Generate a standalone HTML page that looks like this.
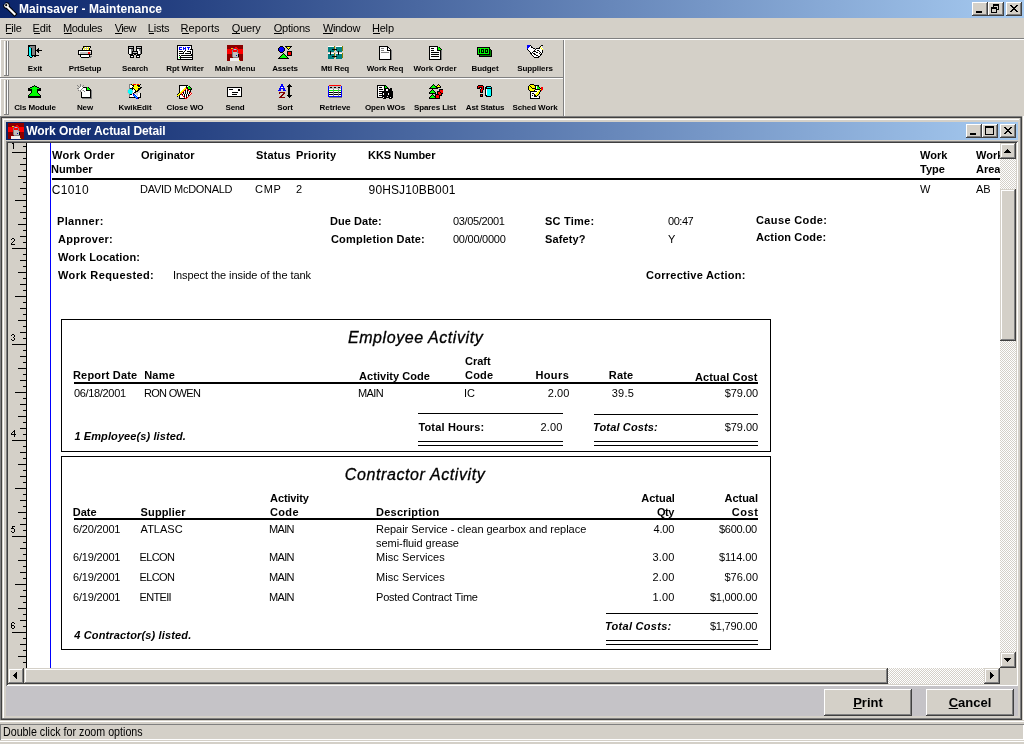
<!DOCTYPE html><html><head><meta charset="utf-8"><style>
html,body{margin:0;padding:0;}
body{width:1024px;height:744px;overflow:hidden;position:relative;background:#D4D0C8;font-family:"Liberation Sans", sans-serif;}
div{box-sizing:border-box;}
svg{position:absolute;shape-rendering:crispEdges;}
.dith{background-color:#fff;background-image:linear-gradient(45deg,#D4D0C8 25%,transparent 25%,transparent 75%,#D4D0C8 75%),linear-gradient(45deg,#D4D0C8 25%,transparent 25%,transparent 75%,#D4D0C8 75%);background-size:2px 2px;background-position:0 0,1px 1px;}
#wrap{position:absolute;left:0;top:0;width:1024px;height:744px;will-change:transform;}
</style></head><body><div id="wrap">
<div style="position:absolute;left:0px;top:0px;width:1024px;height:18px;background:linear-gradient(to right,#0A246A,#A6CAF0);"></div>
<svg style="left:0px;top:0px;shape-rendering:geometricPrecision" width="18" height="18" viewBox="0 0 18 18"><path d="M8 7.5 L14.5 14" stroke="#000" stroke-width="4.2" stroke-linecap="square"/><circle cx="6.5" cy="5.5" r="3.2" fill="#000"/><path d="M8 7.5 L14.5 14" stroke="#fff" stroke-width="2.2" stroke-linecap="square"/><circle cx="6.5" cy="5.5" r="2.3" fill="#fff"/><circle cx="6.2" cy="5.2" r="1.1" fill="#000"/><rect x="3" y="2" width="2.2" height="2.2" fill="#0A246A"/></svg>
<div style="position:absolute;left:19.00px;top:2.84px;font-size:12px;line-height:12px;font-weight:bold;font-style:normal;color:#fff;white-space:nowrap;letter-spacing:0.045px;">Mainsaver - Maintenance</div>
<div style="position:absolute;left:972px;top:2px;width:16px;height:14px;background:#D4D0C8;box-shadow:inset -1px -1px #404040, inset 1px 1px #fff, inset -2px -2px #808080;"></div>
<div style="position:absolute;left:976px;top:11px;width:6px;height:2px;background:#000;"></div>
<div style="position:absolute;left:988px;top:2px;width:16px;height:14px;background:#D4D0C8;box-shadow:inset -1px -1px #404040, inset 1px 1px #fff, inset -2px -2px #808080;"></div>
<svg style="left:988px;top:2px" width="16" height="14" viewBox="0 0 16 14"><rect x="5" y="2" width="6" height="1" fill="#000"/><rect x="5" y="3" width="6" height="1" fill="#000"/><rect x="5" y="4" width="1" height="1" fill="#000"/><rect x="10" y="4" width="1" height="4" fill="#000"/><rect x="9" y="7" width="2" height="1" fill="#000"/><rect x="3" y="5" width="6" height="2" fill="#000"/><rect x="3" y="7" width="1" height="4" fill="#000"/><rect x="8" y="7" width="1" height="4" fill="#000"/><rect x="3" y="10" width="6" height="1" fill="#000"/></svg>
<div style="position:absolute;left:1006px;top:2px;width:16px;height:14px;background:#D4D0C8;box-shadow:inset -1px -1px #404040, inset 1px 1px #fff, inset -2px -2px #808080;"></div>
<svg style="left:1006px;top:2px" width="16" height="14" fill="#000"><rect x="4" y="3" width="1" height="1"/><rect x="5" y="3" width="1" height="1"/><rect x="10" y="3" width="1" height="1"/><rect x="11" y="3" width="1" height="1"/><rect x="5" y="4" width="1" height="1"/><rect x="6" y="4" width="1" height="1"/><rect x="9" y="4" width="1" height="1"/><rect x="10" y="4" width="1" height="1"/><rect x="6" y="5" width="1" height="1"/><rect x="7" y="5" width="1" height="1"/><rect x="8" y="5" width="1" height="1"/><rect x="9" y="5" width="1" height="1"/><rect x="7" y="6" width="1" height="1"/><rect x="8" y="6" width="1" height="1"/><rect x="6" y="7" width="1" height="1"/><rect x="7" y="7" width="1" height="1"/><rect x="8" y="7" width="1" height="1"/><rect x="9" y="7" width="1" height="1"/><rect x="5" y="8" width="1" height="1"/><rect x="6" y="8" width="1" height="1"/><rect x="9" y="8" width="1" height="1"/><rect x="10" y="8" width="1" height="1"/><rect x="4" y="9" width="1" height="1"/><rect x="5" y="9" width="1" height="1"/><rect x="10" y="9" width="1" height="1"/><rect x="11" y="9" width="1" height="1"/></svg>
<div style="position:absolute;left:4.90px;top:22.69px;font-size:11px;line-height:11px;font-weight:normal;font-style:normal;color:#000;white-space:nowrap;letter-spacing:-0.267px;">File</div>
<div style="position:absolute;left:6px;top:33px;width:6px;height:1px;background:#000;"></div>
<div style="position:absolute;left:32.60px;top:22.69px;font-size:11px;line-height:11px;font-weight:normal;font-style:normal;color:#000;white-space:nowrap;letter-spacing:-0.133px;">Edit</div>
<div style="position:absolute;left:34px;top:33px;width:6px;height:1px;background:#000;"></div>
<div style="position:absolute;left:62.90px;top:22.69px;font-size:11px;line-height:11px;font-weight:normal;font-style:normal;color:#000;white-space:nowrap;letter-spacing:-0.317px;">Modules</div>
<div style="position:absolute;left:64px;top:33px;width:8px;height:1px;background:#000;"></div>
<div style="position:absolute;left:114.80px;top:22.69px;font-size:11px;line-height:11px;font-weight:normal;font-style:normal;color:#000;white-space:nowrap;letter-spacing:-0.700px;">View</div>
<div style="position:absolute;left:115px;top:33px;width:7px;height:1px;background:#000;"></div>
<div style="position:absolute;left:147.80px;top:22.69px;font-size:11px;line-height:11px;font-weight:normal;font-style:normal;color:#000;white-space:nowrap;letter-spacing:-0.225px;">Lists</div>
<div style="position:absolute;left:149px;top:33px;width:5px;height:1px;background:#000;"></div>
<div style="position:absolute;left:180.60px;top:22.69px;font-size:11px;line-height:11px;font-weight:normal;font-style:normal;color:#000;white-space:nowrap;letter-spacing:0.083px;">Reports</div>
<div style="position:absolute;left:182px;top:33px;width:7px;height:1px;background:#000;"></div>
<div style="position:absolute;left:231.80px;top:22.69px;font-size:11px;line-height:11px;font-weight:normal;font-style:normal;color:#000;white-space:nowrap;letter-spacing:-0.225px;">Query</div>
<div style="position:absolute;left:232px;top:33px;width:8px;height:1px;background:#000;"></div>
<div style="position:absolute;left:273.80px;top:22.69px;font-size:11px;line-height:11px;font-weight:normal;font-style:normal;color:#000;white-space:nowrap;letter-spacing:-0.233px;">Options</div>
<div style="position:absolute;left:274px;top:33px;width:8px;height:1px;background:#000;"></div>
<div style="position:absolute;left:323.00px;top:22.69px;font-size:11px;line-height:11px;font-weight:normal;font-style:normal;color:#000;white-space:nowrap;letter-spacing:-0.360px;">Window</div>
<div style="position:absolute;left:323px;top:33px;width:10px;height:1px;background:#000;"></div>
<div style="position:absolute;left:371.90px;top:22.69px;font-size:11px;line-height:11px;font-weight:normal;font-style:normal;color:#000;white-space:nowrap;letter-spacing:-0.167px;">Help</div>
<div style="position:absolute;left:373px;top:33px;width:7px;height:1px;background:#000;"></div>
<div style="position:absolute;left:0px;top:38px;width:1024px;height:1px;background:#808080;"></div>
<div style="position:absolute;left:0px;top:39px;width:1024px;height:1px;background:#fff;"></div>
<div style="position:absolute;left:0px;top:39px;width:1px;height:77px;background:#fff;"></div>
<div style="position:absolute;left:0px;top:77px;width:563px;height:1px;background:#808080;"></div>
<div style="position:absolute;left:0px;top:78px;width:563px;height:1px;background:#fff;"></div>
<div style="position:absolute;left:563px;top:40px;width:1px;height:76px;background:#808080;"></div>
<div style="position:absolute;left:564px;top:40px;width:1px;height:76px;background:#fff;"></div>
<div style="position:absolute;left:0px;top:116px;width:1024px;height:1px;background:#808080;"></div>
<div style="position:absolute;left:4px;top:41px;width:1px;height:35px;background:#fff;"></div>
<div style="position:absolute;left:6px;top:41px;width:1px;height:35px;background:#808080;"></div>
<div style="position:absolute;left:7px;top:41px;width:1px;height:35px;background:#fff;"></div>
<div style="position:absolute;left:8px;top:41px;width:1px;height:35px;background:#808080;"></div>
<div style="position:absolute;left:4px;top:75px;width:3px;height:1px;background:#808080;"></div>
<div style="position:absolute;left:7px;top:75px;width:2px;height:1px;background:#808080;"></div>
<div style="position:absolute;left:4px;top:80px;width:1px;height:35px;background:#fff;"></div>
<div style="position:absolute;left:6px;top:80px;width:1px;height:35px;background:#808080;"></div>
<div style="position:absolute;left:7px;top:80px;width:1px;height:35px;background:#fff;"></div>
<div style="position:absolute;left:8px;top:80px;width:1px;height:35px;background:#808080;"></div>
<div style="position:absolute;left:4px;top:114px;width:3px;height:1px;background:#808080;"></div>
<div style="position:absolute;left:7px;top:114px;width:2px;height:1px;background:#808080;"></div>
<div style="position:absolute;left:-165px;width:400px;text-align:center;top:64.53px;font-size:8px;line-height:8px;font-weight:bold;font-style:normal;color:#000;white-space:nowrap;letter-spacing:-0.1px;">Exit</div>
<div style="position:absolute;left:-115px;width:400px;text-align:center;top:64.53px;font-size:8px;line-height:8px;font-weight:bold;font-style:normal;color:#000;white-space:nowrap;letter-spacing:-0.1px;">PrtSetup</div>
<div style="position:absolute;left:-65px;width:400px;text-align:center;top:64.53px;font-size:8px;line-height:8px;font-weight:bold;font-style:normal;color:#000;white-space:nowrap;letter-spacing:-0.1px;">Search</div>
<div style="position:absolute;left:-15px;width:400px;text-align:center;top:64.53px;font-size:8px;line-height:8px;font-weight:bold;font-style:normal;color:#000;white-space:nowrap;letter-spacing:-0.1px;">Rpt Writer</div>
<div style="position:absolute;left:35px;width:400px;text-align:center;top:64.53px;font-size:8px;line-height:8px;font-weight:bold;font-style:normal;color:#000;white-space:nowrap;letter-spacing:-0.1px;">Main Menu</div>
<div style="position:absolute;left:85px;width:400px;text-align:center;top:64.53px;font-size:8px;line-height:8px;font-weight:bold;font-style:normal;color:#000;white-space:nowrap;letter-spacing:-0.1px;">Assets</div>
<div style="position:absolute;left:135px;width:400px;text-align:center;top:64.53px;font-size:8px;line-height:8px;font-weight:bold;font-style:normal;color:#000;white-space:nowrap;letter-spacing:-0.1px;">Mtl Req</div>
<div style="position:absolute;left:185px;width:400px;text-align:center;top:64.53px;font-size:8px;line-height:8px;font-weight:bold;font-style:normal;color:#000;white-space:nowrap;letter-spacing:-0.1px;">Work Req</div>
<div style="position:absolute;left:235px;width:400px;text-align:center;top:64.53px;font-size:8px;line-height:8px;font-weight:bold;font-style:normal;color:#000;white-space:nowrap;letter-spacing:-0.1px;">Work Order</div>
<div style="position:absolute;left:285px;width:400px;text-align:center;top:64.53px;font-size:8px;line-height:8px;font-weight:bold;font-style:normal;color:#000;white-space:nowrap;letter-spacing:-0.1px;">Budget</div>
<div style="position:absolute;left:335px;width:400px;text-align:center;top:64.53px;font-size:8px;line-height:8px;font-weight:bold;font-style:normal;color:#000;white-space:nowrap;letter-spacing:-0.1px;">Suppliers</div>
<div style="position:absolute;left:-165px;width:400px;text-align:center;top:103.53px;font-size:8px;line-height:8px;font-weight:bold;font-style:normal;color:#000;white-space:nowrap;letter-spacing:-0.1px;">Cls Module</div>
<div style="position:absolute;left:-115px;width:400px;text-align:center;top:103.53px;font-size:8px;line-height:8px;font-weight:bold;font-style:normal;color:#000;white-space:nowrap;letter-spacing:-0.1px;">New</div>
<div style="position:absolute;left:-65px;width:400px;text-align:center;top:103.53px;font-size:8px;line-height:8px;font-weight:bold;font-style:normal;color:#000;white-space:nowrap;letter-spacing:-0.1px;">KwikEdit</div>
<div style="position:absolute;left:-15px;width:400px;text-align:center;top:103.53px;font-size:8px;line-height:8px;font-weight:bold;font-style:normal;color:#000;white-space:nowrap;letter-spacing:-0.1px;">Close WO</div>
<div style="position:absolute;left:35px;width:400px;text-align:center;top:103.53px;font-size:8px;line-height:8px;font-weight:bold;font-style:normal;color:#000;white-space:nowrap;letter-spacing:-0.1px;">Send</div>
<div style="position:absolute;left:85px;width:400px;text-align:center;top:103.53px;font-size:8px;line-height:8px;font-weight:bold;font-style:normal;color:#000;white-space:nowrap;letter-spacing:-0.1px;">Sort</div>
<div style="position:absolute;left:135px;width:400px;text-align:center;top:103.53px;font-size:8px;line-height:8px;font-weight:bold;font-style:normal;color:#000;white-space:nowrap;letter-spacing:-0.1px;">Retrieve</div>
<div style="position:absolute;left:185px;width:400px;text-align:center;top:103.53px;font-size:8px;line-height:8px;font-weight:bold;font-style:normal;color:#000;white-space:nowrap;letter-spacing:-0.1px;">Open WOs</div>
<div style="position:absolute;left:235px;width:400px;text-align:center;top:103.53px;font-size:8px;line-height:8px;font-weight:bold;font-style:normal;color:#000;white-space:nowrap;letter-spacing:-0.1px;">Spares List</div>
<div style="position:absolute;left:285px;width:400px;text-align:center;top:103.53px;font-size:8px;line-height:8px;font-weight:bold;font-style:normal;color:#000;white-space:nowrap;letter-spacing:-0.1px;">Ast Status</div>
<div style="position:absolute;left:335px;width:400px;text-align:center;top:103.53px;font-size:8px;line-height:8px;font-weight:bold;font-style:normal;color:#000;white-space:nowrap;letter-spacing:-0.1px;">Sched Work</div>
<svg style="left:27px;top:44px" width="16" height="16" viewBox="0 0 16 16"><rect x="1" y="1" width="8" height="1" fill="#000"/><rect x="1" y="2" width="2" height="1" fill="#000"/><rect x="3" y="2" width="5" height="1" fill="#808080"/><rect x="8" y="2" width="1" height="1" fill="#000"/><rect x="1" y="3" width="1" height="1" fill="#000"/><rect x="2" y="3" width="1" height="1" fill="#00FFFF"/><rect x="3" y="3" width="5" height="1" fill="#808080"/><rect x="8" y="3" width="1" height="1" fill="#000"/><rect x="1" y="4" width="1" height="1" fill="#000"/><rect x="2" y="4" width="2" height="1" fill="#00FFFF"/><rect x="4" y="4" width="1" height="1" fill="#000"/><rect x="5" y="4" width="3" height="1" fill="#808080"/><rect x="8" y="4" width="1" height="1" fill="#000"/><rect x="11" y="4" width="1" height="1" fill="#000"/><rect x="1" y="5" width="1" height="1" fill="#000"/><rect x="2" y="5" width="2" height="1" fill="#00FFFF"/><rect x="4" y="5" width="1" height="1" fill="#000"/><rect x="5" y="5" width="3" height="1" fill="#808080"/><rect x="8" y="5" width="1" height="1" fill="#000"/><rect x="10" y="5" width="2" height="1" fill="#000"/><rect x="1" y="6" width="1" height="1" fill="#000"/><rect x="2" y="6" width="2" height="1" fill="#00FFFF"/><rect x="4" y="6" width="1" height="1" fill="#000"/><rect x="5" y="6" width="3" height="1" fill="#808080"/><rect x="8" y="6" width="7" height="1" fill="#000"/><rect x="1" y="7" width="1" height="1" fill="#000"/><rect x="2" y="7" width="2" height="1" fill="#00FFFF"/><rect x="4" y="7" width="1" height="1" fill="#000"/><rect x="5" y="7" width="3" height="1" fill="#808080"/><rect x="8" y="7" width="1" height="1" fill="#000"/><rect x="10" y="7" width="2" height="1" fill="#000"/><rect x="1" y="8" width="1" height="1" fill="#000"/><rect x="2" y="8" width="2" height="1" fill="#00FFFF"/><rect x="4" y="8" width="1" height="1" fill="#000"/><rect x="5" y="8" width="3" height="1" fill="#808080"/><rect x="8" y="8" width="1" height="1" fill="#000"/><rect x="11" y="8" width="1" height="1" fill="#000"/><rect x="1" y="9" width="1" height="1" fill="#000"/><rect x="2" y="9" width="2" height="1" fill="#00FFFF"/><rect x="4" y="9" width="1" height="1" fill="#000"/><rect x="5" y="9" width="3" height="1" fill="#808080"/><rect x="8" y="9" width="1" height="1" fill="#000"/><rect x="1" y="10" width="1" height="1" fill="#000"/><rect x="2" y="10" width="2" height="1" fill="#00FFFF"/><rect x="4" y="10" width="1" height="1" fill="#000"/><rect x="5" y="10" width="3" height="1" fill="#808080"/><rect x="8" y="10" width="1" height="1" fill="#000"/><rect x="0" y="11" width="2" height="1" fill="#000"/><rect x="2" y="11" width="2" height="1" fill="#00FFFF"/><rect x="4" y="11" width="8" height="1" fill="#000"/><rect x="2" y="12" width="1" height="1" fill="#000"/><rect x="3" y="12" width="2" height="1" fill="#00FFFF"/><rect x="5" y="12" width="1" height="1" fill="#000"/><rect x="7" y="12" width="2" height="1" fill="#000"/><rect x="3" y="13" width="2" height="1" fill="#000"/></svg>
<svg style="left:77px;top:44px" width="16" height="16" viewBox="0 0 16 16"><rect x="6" y="2" width="8" height="1" fill="#000"/><rect x="6" y="3" width="1" height="1" fill="#000"/><rect x="7" y="3" width="1" height="1" fill="#FFFF00"/><rect x="8" y="3" width="1" height="1" fill="#fff"/><rect x="9" y="3" width="1" height="1" fill="#FFFF00"/><rect x="10" y="3" width="1" height="1" fill="#fff"/><rect x="11" y="3" width="1" height="1" fill="#FFFF00"/><rect x="12" y="3" width="1" height="1" fill="#fff"/><rect x="13" y="3" width="1" height="1" fill="#000"/><rect x="5" y="4" width="1" height="1" fill="#000"/><rect x="6" y="4" width="1" height="1" fill="#FFFF00"/><rect x="7" y="4" width="4" height="1" fill="#C0C0C0"/><rect x="11" y="4" width="1" height="1" fill="#FFFF00"/><rect x="12" y="4" width="1" height="1" fill="#000"/><rect x="5" y="5" width="1" height="1" fill="#000"/><rect x="6" y="5" width="1" height="1" fill="#fff"/><rect x="7" y="5" width="1" height="1" fill="#FFFF00"/><rect x="8" y="5" width="1" height="1" fill="#fff"/><rect x="9" y="5" width="1" height="1" fill="#FFFF00"/><rect x="10" y="5" width="1" height="1" fill="#fff"/><rect x="11" y="5" width="1" height="1" fill="#FFFF00"/><rect x="12" y="5" width="1" height="1" fill="#000"/><rect x="1" y="6" width="14" height="1" fill="#000"/><rect x="1" y="7" width="1" height="1" fill="#000"/><rect x="2" y="7" width="12" height="1" fill="#fff"/><rect x="14" y="7" width="1" height="1" fill="#000"/><rect x="1" y="8" width="1" height="1" fill="#000"/><rect x="2" y="8" width="1" height="1" fill="#fff"/><rect x="3" y="8" width="8" height="1" fill="#C0C0C0"/><rect x="11" y="8" width="2" height="1" fill="#FF0000"/><rect x="13" y="8" width="1" height="1" fill="#C0C0C0"/><rect x="14" y="8" width="1" height="1" fill="#000"/><rect x="1" y="9" width="1" height="1" fill="#000"/><rect x="2" y="9" width="1" height="1" fill="#fff"/><rect x="3" y="9" width="8" height="1" fill="#C0C0C0"/><rect x="11" y="9" width="2" height="1" fill="#FF0000"/><rect x="13" y="9" width="1" height="1" fill="#C0C0C0"/><rect x="14" y="9" width="1" height="1" fill="#000"/><rect x="1" y="10" width="14" height="1" fill="#000"/><rect x="3" y="11" width="1" height="1" fill="#000"/><rect x="4" y="11" width="8" height="1" fill="#fff"/><rect x="12" y="11" width="1" height="1" fill="#000"/><rect x="3" y="12" width="1" height="1" fill="#000"/><rect x="4" y="12" width="8" height="1" fill="#fff"/><rect x="12" y="12" width="1" height="1" fill="#000"/><rect x="13" y="12" width="2" height="1" fill="#808080"/><rect x="4" y="13" width="8" height="1" fill="#000"/><rect x="12" y="13" width="2" height="1" fill="#808080"/></svg>
<svg style="left:127px;top:44px" width="16" height="16" viewBox="0 0 16 16"><rect x="1" y="2" width="6" height="1" fill="#000"/><rect x="9" y="2" width="6" height="1" fill="#000"/><rect x="1" y="3" width="1" height="1" fill="#000"/><rect x="2" y="3" width="4" height="1" fill="#C0C0C0"/><rect x="6" y="3" width="1" height="1" fill="#000"/><rect x="9" y="3" width="1" height="1" fill="#000"/><rect x="10" y="3" width="4" height="1" fill="#C0C0C0"/><rect x="14" y="3" width="1" height="1" fill="#000"/><rect x="1" y="4" width="6" height="1" fill="#000"/><rect x="9" y="4" width="6" height="1" fill="#000"/><rect x="1" y="5" width="1" height="1" fill="#000"/><rect x="2" y="5" width="2" height="1" fill="#fff"/><rect x="4" y="5" width="2" height="1" fill="#808080"/><rect x="6" y="5" width="1" height="1" fill="#000"/><rect x="9" y="5" width="1" height="1" fill="#000"/><rect x="10" y="5" width="2" height="1" fill="#fff"/><rect x="12" y="5" width="2" height="1" fill="#808080"/><rect x="14" y="5" width="1" height="1" fill="#000"/><rect x="1" y="6" width="1" height="1" fill="#000"/><rect x="2" y="6" width="2" height="1" fill="#fff"/><rect x="4" y="6" width="2" height="1" fill="#808080"/><rect x="6" y="6" width="1" height="1" fill="#000"/><rect x="9" y="6" width="1" height="1" fill="#000"/><rect x="10" y="6" width="2" height="1" fill="#fff"/><rect x="12" y="6" width="2" height="1" fill="#808080"/><rect x="14" y="6" width="1" height="1" fill="#000"/><rect x="1" y="7" width="1" height="1" fill="#000"/><rect x="2" y="7" width="2" height="1" fill="#fff"/><rect x="4" y="7" width="1" height="1" fill="#808080"/><rect x="5" y="7" width="6" height="1" fill="#000"/><rect x="11" y="7" width="2" height="1" fill="#fff"/><rect x="13" y="7" width="1" height="1" fill="#808080"/><rect x="14" y="7" width="1" height="1" fill="#000"/><rect x="1" y="8" width="1" height="1" fill="#000"/><rect x="2" y="8" width="2" height="1" fill="#fff"/><rect x="4" y="8" width="1" height="1" fill="#808080"/><rect x="5" y="8" width="1" height="1" fill="#000"/><rect x="6" y="8" width="4" height="1" fill="#C0C0C0"/><rect x="10" y="8" width="1" height="1" fill="#000"/><rect x="11" y="8" width="2" height="1" fill="#fff"/><rect x="13" y="8" width="1" height="1" fill="#808080"/><rect x="14" y="8" width="1" height="1" fill="#000"/><rect x="1" y="9" width="1" height="1" fill="#000"/><rect x="2" y="9" width="2" height="1" fill="#fff"/><rect x="4" y="9" width="1" height="1" fill="#808080"/><rect x="5" y="9" width="6" height="1" fill="#000"/><rect x="11" y="9" width="2" height="1" fill="#fff"/><rect x="13" y="9" width="1" height="1" fill="#808080"/><rect x="14" y="9" width="1" height="1" fill="#000"/><rect x="2" y="10" width="4" height="1" fill="#000"/><rect x="7" y="10" width="2" height="1" fill="#000"/><rect x="10" y="10" width="4" height="1" fill="#000"/><rect x="3" y="11" width="4" height="1" fill="#000"/><rect x="9" y="11" width="4" height="1" fill="#000"/><rect x="3" y="12" width="1" height="1" fill="#000"/><rect x="4" y="12" width="2" height="1" fill="#fff"/><rect x="6" y="12" width="1" height="1" fill="#000"/><rect x="9" y="12" width="1" height="1" fill="#000"/><rect x="10" y="12" width="2" height="1" fill="#fff"/><rect x="12" y="12" width="1" height="1" fill="#000"/><rect x="3" y="13" width="4" height="1" fill="#000"/><rect x="9" y="13" width="4" height="1" fill="#000"/></svg>
<svg style="left:177px;top:45px" width="16" height="16" viewBox="0 0 16 16"><rect x="0" y="0" width="15" height="1" fill="#000"/><rect x="0" y="1" width="1" height="1" fill="#000"/><rect x="1" y="1" width="13" height="1" fill="#fff"/><rect x="14" y="1" width="1" height="1" fill="#000"/><rect x="0" y="2" width="1" height="1" fill="#000"/><rect x="1" y="2" width="1" height="1" fill="#fff"/><rect x="2" y="2" width="3" height="1" fill="#0000FF"/><rect x="5" y="2" width="1" height="1" fill="#fff"/><rect x="6" y="2" width="1" height="1" fill="#0000FF"/><rect x="7" y="2" width="1" height="1" fill="#fff"/><rect x="8" y="2" width="1" height="1" fill="#0000FF"/><rect x="9" y="2" width="1" height="1" fill="#fff"/><rect x="10" y="2" width="3" height="1" fill="#0000FF"/><rect x="13" y="2" width="1" height="1" fill="#fff"/><rect x="14" y="2" width="1" height="1" fill="#000"/><rect x="0" y="3" width="1" height="1" fill="#000"/><rect x="1" y="3" width="1" height="1" fill="#fff"/><rect x="2" y="3" width="1" height="1" fill="#0000FF"/><rect x="3" y="3" width="3" height="1" fill="#fff"/><rect x="6" y="3" width="3" height="1" fill="#0000FF"/><rect x="9" y="3" width="2" height="1" fill="#fff"/><rect x="11" y="3" width="1" height="1" fill="#0000FF"/><rect x="12" y="3" width="2" height="1" fill="#fff"/><rect x="14" y="3" width="1" height="1" fill="#000"/><rect x="0" y="4" width="1" height="1" fill="#000"/><rect x="1" y="4" width="1" height="1" fill="#fff"/><rect x="2" y="4" width="3" height="1" fill="#0000FF"/><rect x="5" y="4" width="1" height="1" fill="#fff"/><rect x="6" y="4" width="1" height="1" fill="#0000FF"/><rect x="7" y="4" width="1" height="1" fill="#fff"/><rect x="8" y="4" width="1" height="1" fill="#0000FF"/><rect x="9" y="4" width="2" height="1" fill="#fff"/><rect x="11" y="4" width="1" height="1" fill="#0000FF"/><rect x="12" y="4" width="1" height="1" fill="#fff"/><rect x="13" y="4" width="3" height="1" fill="#000"/><rect x="0" y="5" width="1" height="1" fill="#000"/><rect x="1" y="5" width="7" height="1" fill="#fff"/><rect x="8" y="5" width="1" height="1" fill="#000"/><rect x="9" y="5" width="6" height="1" fill="#fff"/><rect x="15" y="5" width="1" height="1" fill="#000"/><rect x="0" y="6" width="1" height="1" fill="#000"/><rect x="1" y="6" width="1" height="1" fill="#fff"/><rect x="2" y="6" width="4" height="1" fill="#000"/><rect x="6" y="6" width="1" height="1" fill="#fff"/><rect x="7" y="6" width="1" height="1" fill="#000"/><rect x="8" y="6" width="2" height="1" fill="#fff"/><rect x="10" y="6" width="4" height="1" fill="#000"/><rect x="14" y="6" width="1" height="1" fill="#fff"/><rect x="15" y="6" width="1" height="1" fill="#000"/><rect x="0" y="7" width="1" height="1" fill="#000"/><rect x="1" y="7" width="5" height="1" fill="#fff"/><rect x="6" y="7" width="1" height="1" fill="#000"/><rect x="7" y="7" width="6" height="1" fill="#fff"/><rect x="13" y="7" width="1" height="1" fill="#000"/><rect x="14" y="7" width="1" height="1" fill="#fff"/><rect x="15" y="7" width="1" height="1" fill="#000"/><rect x="0" y="8" width="1" height="1" fill="#000"/><rect x="1" y="8" width="1" height="1" fill="#fff"/><rect x="2" y="8" width="5" height="1" fill="#000"/><rect x="7" y="8" width="1" height="1" fill="#fff"/><rect x="8" y="8" width="6" height="1" fill="#000"/><rect x="14" y="8" width="1" height="1" fill="#fff"/><rect x="15" y="8" width="1" height="1" fill="#000"/><rect x="0" y="9" width="1" height="1" fill="#000"/><rect x="1" y="9" width="13" height="1" fill="#fff"/><rect x="14" y="9" width="2" height="1" fill="#000"/><rect x="0" y="10" width="1" height="1" fill="#000"/><rect x="1" y="10" width="1" height="1" fill="#fff"/><rect x="2" y="10" width="1" height="1" fill="#000"/><rect x="3" y="10" width="1" height="1" fill="#fff"/><rect x="4" y="10" width="12" height="1" fill="#000"/><rect x="0" y="11" width="1" height="1" fill="#000"/><rect x="1" y="11" width="2" height="1" fill="#fff"/><rect x="3" y="11" width="1" height="1" fill="#000"/><rect x="4" y="11" width="11" height="1" fill="#fff"/><rect x="15" y="11" width="1" height="1" fill="#000"/><rect x="0" y="12" width="1" height="1" fill="#000"/><rect x="1" y="12" width="1" height="1" fill="#fff"/><rect x="2" y="12" width="1" height="1" fill="#00FF00"/><rect x="3" y="12" width="13" height="1" fill="#000"/><rect x="0" y="13" width="1" height="1" fill="#000"/><rect x="1" y="13" width="2" height="1" fill="#fff"/><rect x="3" y="13" width="1" height="1" fill="#000"/><rect x="4" y="13" width="11" height="1" fill="#fff"/><rect x="15" y="13" width="1" height="1" fill="#000"/><rect x="0" y="14" width="16" height="1" fill="#000"/></svg>
<svg style="left:227px;top:45px" width="16" height="16" viewBox="0 0 16 16"><rect x="0" y="0" width="16" height="1" fill="#8B0000"/><rect x="0" y="1" width="16" height="1" fill="#8B0000"/><rect x="0" y="2" width="8" height="1" fill="#8B0000"/><rect x="8" y="2" width="2" height="1" fill="#FF0000"/><rect x="10" y="2" width="6" height="1" fill="#8B0000"/><rect x="0" y="3" width="4" height="1" fill="#8B0000"/><rect x="4" y="3" width="2" height="1" fill="#E0E000"/><rect x="6" y="3" width="1" height="1" fill="#8000C0"/><rect x="7" y="3" width="4" height="1" fill="#FF0000"/><rect x="11" y="3" width="5" height="1" fill="#8B0000"/><rect x="0" y="4" width="6" height="1" fill="#FF0000"/><rect x="6" y="4" width="1" height="1" fill="#808080"/><rect x="7" y="4" width="2" height="1" fill="#C0C0C0"/><rect x="9" y="4" width="1" height="1" fill="#808080"/><rect x="10" y="4" width="6" height="1" fill="#FF0000"/><rect x="0" y="5" width="5" height="1" fill="#FF0000"/><rect x="5" y="5" width="1" height="1" fill="#808080"/><rect x="6" y="5" width="4" height="1" fill="#FF0000"/><rect x="10" y="5" width="1" height="1" fill="#808080"/><rect x="11" y="5" width="5" height="1" fill="#FF0000"/><rect x="0" y="6" width="5" height="1" fill="#FF0000"/><rect x="5" y="6" width="1" height="1" fill="#808080"/><rect x="6" y="6" width="4" height="1" fill="#FF0000"/><rect x="10" y="6" width="1" height="1" fill="#808080"/><rect x="11" y="6" width="5" height="1" fill="#FF0000"/><rect x="0" y="7" width="5" height="1" fill="#FF0000"/><rect x="5" y="7" width="1" height="1" fill="#808080"/><rect x="6" y="7" width="4" height="1" fill="#C0C0C0"/><rect x="10" y="7" width="1" height="1" fill="#808080"/><rect x="11" y="7" width="5" height="1" fill="#FF0000"/><rect x="0" y="8" width="5" height="1" fill="#FF0000"/><rect x="5" y="8" width="1" height="1" fill="#808080"/><rect x="6" y="8" width="5" height="1" fill="#C0C0C0"/><rect x="11" y="8" width="1" height="1" fill="#808080"/><rect x="12" y="8" width="4" height="1" fill="#FF0000"/><rect x="0" y="9" width="5" height="1" fill="#8B0000"/><rect x="5" y="9" width="1" height="1" fill="#808080"/><rect x="6" y="9" width="5" height="1" fill="#C0C0C0"/><rect x="11" y="9" width="1" height="1" fill="#000"/><rect x="12" y="9" width="4" height="1" fill="#8B0000"/><rect x="0" y="10" width="5" height="1" fill="#8B0000"/><rect x="5" y="10" width="1" height="1" fill="#808080"/><rect x="6" y="10" width="3" height="1" fill="#C0C0C0"/><rect x="9" y="10" width="1" height="1" fill="#0000A0"/><rect x="10" y="10" width="1" height="1" fill="#C0C0C0"/><rect x="11" y="10" width="1" height="1" fill="#000"/><rect x="12" y="10" width="4" height="1" fill="#8B0000"/><rect x="0" y="11" width="5" height="1" fill="#8B0000"/><rect x="5" y="11" width="1" height="1" fill="#808080"/><rect x="6" y="11" width="5" height="1" fill="#C0C0C0"/><rect x="11" y="11" width="1" height="1" fill="#000"/><rect x="12" y="11" width="4" height="1" fill="#8B0000"/><rect x="0" y="12" width="6" height="1" fill="#8B0000"/><rect x="6" y="12" width="6" height="1" fill="#808080"/><rect x="12" y="12" width="4" height="1" fill="#8B0000"/><rect x="0" y="13" width="3" height="1" fill="#8B0000"/><rect x="3" y="13" width="9" height="1" fill="#F0F0F0"/><rect x="12" y="13" width="4" height="1" fill="#8B0000"/><rect x="0" y="14" width="3" height="1" fill="#8B0000"/><rect x="3" y="14" width="9" height="1" fill="#F0F0F0"/><rect x="12" y="14" width="4" height="1" fill="#8B0000"/><rect x="0" y="15" width="3" height="1" fill="#8B0000"/><rect x="3" y="15" width="9" height="1" fill="#F0F0F0"/><rect x="12" y="15" width="1" height="1" fill="#E0E000"/><rect x="13" y="15" width="3" height="1" fill="#8B0000"/></svg>
<svg style="left:277px;top:44px" width="16" height="16" viewBox="0 0 16 16"><rect x="3" y="2" width="3" height="1" fill="#000"/><rect x="8" y="2" width="7" height="1" fill="#000"/><rect x="2" y="3" width="1" height="1" fill="#000"/><rect x="3" y="3" width="3" height="1" fill="#0000FF"/><rect x="6" y="3" width="1" height="1" fill="#000"/><rect x="9" y="3" width="1" height="1" fill="#000"/><rect x="10" y="3" width="3" height="1" fill="#FFFF00"/><rect x="13" y="3" width="1" height="1" fill="#000"/><rect x="1" y="4" width="1" height="1" fill="#000"/><rect x="2" y="4" width="5" height="1" fill="#0000FF"/><rect x="7" y="4" width="1" height="1" fill="#000"/><rect x="10" y="4" width="1" height="1" fill="#000"/><rect x="11" y="4" width="1" height="1" fill="#FFFF00"/><rect x="12" y="4" width="1" height="1" fill="#000"/><rect x="1" y="5" width="1" height="1" fill="#000"/><rect x="2" y="5" width="5" height="1" fill="#0000FF"/><rect x="7" y="5" width="1" height="1" fill="#000"/><rect x="11" y="5" width="1" height="1" fill="#000"/><rect x="1" y="6" width="1" height="1" fill="#000"/><rect x="2" y="6" width="5" height="1" fill="#0000FF"/><rect x="7" y="6" width="1" height="1" fill="#000"/><rect x="2" y="7" width="1" height="1" fill="#000"/><rect x="3" y="7" width="3" height="1" fill="#0000FF"/><rect x="6" y="7" width="1" height="1" fill="#000"/><rect x="10" y="7" width="5" height="1" fill="#000"/><rect x="3" y="8" width="3" height="1" fill="#000"/><rect x="10" y="8" width="1" height="1" fill="#000"/><rect x="11" y="8" width="3" height="1" fill="#FF0000"/><rect x="14" y="8" width="1" height="1" fill="#000"/><rect x="6" y="9" width="1" height="1" fill="#000"/><rect x="10" y="9" width="1" height="1" fill="#000"/><rect x="11" y="9" width="3" height="1" fill="#FF0000"/><rect x="14" y="9" width="1" height="1" fill="#000"/><rect x="5" y="10" width="1" height="1" fill="#000"/><rect x="6" y="10" width="1" height="1" fill="#00FF00"/><rect x="7" y="10" width="1" height="1" fill="#000"/><rect x="10" y="10" width="1" height="1" fill="#000"/><rect x="11" y="10" width="3" height="1" fill="#FF0000"/><rect x="14" y="10" width="1" height="1" fill="#000"/><rect x="4" y="11" width="1" height="1" fill="#000"/><rect x="5" y="11" width="3" height="1" fill="#00FF00"/><rect x="8" y="11" width="1" height="1" fill="#000"/><rect x="10" y="11" width="5" height="1" fill="#000"/><rect x="3" y="12" width="1" height="1" fill="#000"/><rect x="4" y="12" width="5" height="1" fill="#00FF00"/><rect x="9" y="12" width="1" height="1" fill="#000"/><rect x="2" y="13" width="1" height="1" fill="#000"/><rect x="3" y="13" width="7" height="1" fill="#00FF00"/><rect x="10" y="13" width="1" height="1" fill="#000"/><rect x="1" y="14" width="11" height="1" fill="#000"/></svg>
<svg style="left:327px;top:44px" width="16" height="16" viewBox="0 0 16 16"><rect x="1" y="2" width="6" height="1" fill="#fff"/><rect x="7" y="2" width="1" height="1" fill="#808000"/><rect x="9" y="2" width="6" height="1" fill="#fff"/><rect x="15" y="2" width="1" height="1" fill="#808000"/><rect x="1" y="3" width="6" height="1" fill="#008080"/><rect x="7" y="3" width="1" height="1" fill="#808000"/><rect x="9" y="3" width="6" height="1" fill="#008080"/><rect x="15" y="3" width="1" height="1" fill="#808000"/><rect x="1" y="4" width="6" height="1" fill="#008080"/><rect x="7" y="4" width="1" height="1" fill="#808000"/><rect x="9" y="4" width="6" height="1" fill="#008080"/><rect x="15" y="4" width="1" height="1" fill="#808000"/><rect x="1" y="5" width="4" height="1" fill="#008080"/><rect x="5" y="5" width="5" height="1" fill="#000"/><rect x="10" y="5" width="5" height="1" fill="#008080"/><rect x="15" y="5" width="1" height="1" fill="#808000"/><rect x="1" y="6" width="6" height="1" fill="#008080"/><rect x="7" y="6" width="1" height="1" fill="#808000"/><rect x="9" y="6" width="6" height="1" fill="#008080"/><rect x="15" y="6" width="1" height="1" fill="#808000"/><rect x="1" y="7" width="2" height="1" fill="#008080"/><rect x="3" y="7" width="1" height="1" fill="#000"/><rect x="4" y="7" width="3" height="1" fill="#008080"/><rect x="10" y="7" width="1" height="1" fill="#008080"/><rect x="11" y="7" width="1" height="1" fill="#000"/><rect x="12" y="7" width="3" height="1" fill="#008080"/><rect x="3" y="8" width="1" height="1" fill="#000"/><rect x="11" y="8" width="1" height="1" fill="#000"/><rect x="1" y="9" width="2" height="1" fill="#fff"/><rect x="3" y="9" width="1" height="1" fill="#000"/><rect x="4" y="9" width="3" height="1" fill="#fff"/><rect x="7" y="9" width="1" height="1" fill="#808000"/><rect x="9" y="9" width="2" height="1" fill="#fff"/><rect x="11" y="9" width="1" height="1" fill="#000"/><rect x="12" y="9" width="3" height="1" fill="#fff"/><rect x="15" y="9" width="1" height="1" fill="#808000"/><rect x="1" y="10" width="2" height="1" fill="#008080"/><rect x="3" y="10" width="1" height="1" fill="#000"/><rect x="4" y="10" width="3" height="1" fill="#008080"/><rect x="7" y="10" width="1" height="1" fill="#808000"/><rect x="9" y="10" width="2" height="1" fill="#008080"/><rect x="11" y="10" width="1" height="1" fill="#000"/><rect x="12" y="10" width="3" height="1" fill="#008080"/><rect x="15" y="10" width="1" height="1" fill="#808000"/><rect x="1" y="11" width="6" height="1" fill="#008080"/><rect x="7" y="11" width="1" height="1" fill="#808000"/><rect x="9" y="11" width="6" height="1" fill="#008080"/><rect x="15" y="11" width="1" height="1" fill="#808000"/><rect x="1" y="12" width="4" height="1" fill="#008080"/><rect x="5" y="12" width="5" height="1" fill="#000"/><rect x="10" y="12" width="5" height="1" fill="#008080"/><rect x="15" y="12" width="1" height="1" fill="#808000"/><rect x="1" y="13" width="6" height="1" fill="#008080"/><rect x="7" y="13" width="1" height="1" fill="#808000"/><rect x="9" y="13" width="6" height="1" fill="#008080"/><rect x="15" y="13" width="1" height="1" fill="#808000"/><rect x="1" y="14" width="6" height="1" fill="#008080"/><rect x="9" y="14" width="6" height="1" fill="#008080"/></svg>
<svg style="left:377px;top:44px" width="16" height="16" viewBox="0 0 16 16"><rect x="2" y="2" width="9" height="1" fill="#000"/><rect x="2" y="3" width="1" height="1" fill="#000"/><rect x="3" y="3" width="7" height="1" fill="#fff"/><rect x="10" y="3" width="2" height="1" fill="#000"/><rect x="2" y="4" width="1" height="1" fill="#000"/><rect x="3" y="4" width="1" height="1" fill="#fff"/><rect x="4" y="4" width="3" height="1" fill="#808080"/><rect x="7" y="4" width="3" height="1" fill="#fff"/><rect x="10" y="4" width="1" height="1" fill="#000"/><rect x="11" y="4" width="1" height="1" fill="#fff"/><rect x="12" y="4" width="1" height="1" fill="#000"/><rect x="2" y="5" width="1" height="1" fill="#000"/><rect x="3" y="5" width="7" height="1" fill="#fff"/><rect x="10" y="5" width="1" height="1" fill="#000"/><rect x="11" y="5" width="2" height="1" fill="#fff"/><rect x="13" y="5" width="1" height="1" fill="#000"/><rect x="2" y="6" width="1" height="1" fill="#000"/><rect x="3" y="6" width="1" height="1" fill="#fff"/><rect x="4" y="6" width="3" height="1" fill="#808080"/><rect x="7" y="6" width="3" height="1" fill="#fff"/><rect x="10" y="6" width="4" height="1" fill="#000"/><rect x="14" y="6" width="1" height="1" fill="#808080"/><rect x="2" y="7" width="1" height="1" fill="#000"/><rect x="3" y="7" width="10" height="1" fill="#fff"/><rect x="13" y="7" width="1" height="1" fill="#000"/><rect x="14" y="7" width="1" height="1" fill="#808080"/><rect x="2" y="8" width="1" height="1" fill="#000"/><rect x="3" y="8" width="1" height="1" fill="#fff"/><rect x="4" y="8" width="8" height="1" fill="#808080"/><rect x="12" y="8" width="1" height="1" fill="#fff"/><rect x="13" y="8" width="1" height="1" fill="#000"/><rect x="14" y="8" width="1" height="1" fill="#808080"/><rect x="2" y="9" width="1" height="1" fill="#000"/><rect x="3" y="9" width="10" height="1" fill="#fff"/><rect x="13" y="9" width="1" height="1" fill="#000"/><rect x="14" y="9" width="1" height="1" fill="#808080"/><rect x="2" y="10" width="1" height="1" fill="#000"/><rect x="3" y="10" width="10" height="1" fill="#fff"/><rect x="13" y="10" width="1" height="1" fill="#000"/><rect x="14" y="10" width="1" height="1" fill="#808080"/><rect x="2" y="11" width="1" height="1" fill="#000"/><rect x="3" y="11" width="10" height="1" fill="#fff"/><rect x="13" y="11" width="1" height="1" fill="#000"/><rect x="14" y="11" width="1" height="1" fill="#808080"/><rect x="2" y="12" width="1" height="1" fill="#000"/><rect x="3" y="12" width="10" height="1" fill="#fff"/><rect x="13" y="12" width="1" height="1" fill="#000"/><rect x="14" y="12" width="1" height="1" fill="#808080"/><rect x="2" y="13" width="1" height="1" fill="#000"/><rect x="3" y="13" width="10" height="1" fill="#fff"/><rect x="13" y="13" width="1" height="1" fill="#000"/><rect x="14" y="13" width="1" height="1" fill="#808080"/><rect x="2" y="14" width="1" height="1" fill="#000"/><rect x="3" y="14" width="10" height="1" fill="#fff"/><rect x="13" y="14" width="1" height="1" fill="#000"/><rect x="14" y="14" width="1" height="1" fill="#808080"/><rect x="2" y="15" width="12" height="1" fill="#000"/><rect x="14" y="15" width="1" height="1" fill="#808080"/></svg>
<svg style="left:427px;top:44px" width="16" height="16" viewBox="0 0 16 16"><rect x="2" y="2" width="9" height="1" fill="#000"/><rect x="2" y="3" width="1" height="1" fill="#000"/><rect x="3" y="3" width="7" height="1" fill="#fff"/><rect x="10" y="3" width="1" height="1" fill="#000"/><rect x="11" y="3" width="1" height="1" fill="#00FF00"/><rect x="12" y="3" width="1" height="1" fill="#000"/><rect x="2" y="4" width="1" height="1" fill="#000"/><rect x="3" y="4" width="1" height="1" fill="#fff"/><rect x="4" y="4" width="3" height="1" fill="#000"/><rect x="7" y="4" width="3" height="1" fill="#fff"/><rect x="10" y="4" width="1" height="1" fill="#000"/><rect x="11" y="4" width="2" height="1" fill="#00FF00"/><rect x="13" y="4" width="1" height="1" fill="#000"/><rect x="2" y="5" width="1" height="1" fill="#000"/><rect x="3" y="5" width="7" height="1" fill="#fff"/><rect x="10" y="5" width="1" height="1" fill="#000"/><rect x="11" y="5" width="3" height="1" fill="#00FF00"/><rect x="14" y="5" width="1" height="1" fill="#000"/><rect x="2" y="6" width="1" height="1" fill="#000"/><rect x="3" y="6" width="1" height="1" fill="#fff"/><rect x="4" y="6" width="3" height="1" fill="#000"/><rect x="7" y="6" width="3" height="1" fill="#fff"/><rect x="10" y="6" width="4" height="1" fill="#000"/><rect x="14" y="6" width="1" height="1" fill="#808080"/><rect x="2" y="7" width="1" height="1" fill="#000"/><rect x="3" y="7" width="10" height="1" fill="#fff"/><rect x="13" y="7" width="1" height="1" fill="#000"/><rect x="14" y="7" width="1" height="1" fill="#808080"/><rect x="2" y="8" width="1" height="1" fill="#000"/><rect x="3" y="8" width="1" height="1" fill="#fff"/><rect x="4" y="8" width="8" height="1" fill="#000"/><rect x="12" y="8" width="1" height="1" fill="#fff"/><rect x="13" y="8" width="1" height="1" fill="#000"/><rect x="14" y="8" width="1" height="1" fill="#808080"/><rect x="2" y="9" width="1" height="1" fill="#000"/><rect x="3" y="9" width="10" height="1" fill="#fff"/><rect x="13" y="9" width="1" height="1" fill="#000"/><rect x="14" y="9" width="1" height="1" fill="#808080"/><rect x="2" y="10" width="1" height="1" fill="#000"/><rect x="3" y="10" width="1" height="1" fill="#fff"/><rect x="4" y="10" width="8" height="1" fill="#000"/><rect x="12" y="10" width="1" height="1" fill="#fff"/><rect x="13" y="10" width="1" height="1" fill="#000"/><rect x="14" y="10" width="1" height="1" fill="#808080"/><rect x="2" y="11" width="1" height="1" fill="#000"/><rect x="3" y="11" width="10" height="1" fill="#fff"/><rect x="13" y="11" width="1" height="1" fill="#000"/><rect x="14" y="11" width="1" height="1" fill="#808080"/><rect x="2" y="12" width="1" height="1" fill="#000"/><rect x="3" y="12" width="1" height="1" fill="#fff"/><rect x="4" y="12" width="8" height="1" fill="#000"/><rect x="12" y="12" width="1" height="1" fill="#fff"/><rect x="13" y="12" width="1" height="1" fill="#000"/><rect x="14" y="12" width="1" height="1" fill="#808080"/><rect x="2" y="13" width="1" height="1" fill="#000"/><rect x="3" y="13" width="10" height="1" fill="#fff"/><rect x="13" y="13" width="1" height="1" fill="#000"/><rect x="14" y="13" width="1" height="1" fill="#808080"/><rect x="2" y="14" width="1" height="1" fill="#000"/><rect x="3" y="14" width="10" height="1" fill="#fff"/><rect x="13" y="14" width="1" height="1" fill="#000"/><rect x="14" y="14" width="1" height="1" fill="#808080"/><rect x="2" y="15" width="12" height="1" fill="#000"/><rect x="14" y="15" width="1" height="1" fill="#808080"/></svg>
<svg style="left:477px;top:44px" width="16" height="16" viewBox="0 0 16 16"><rect x="0" y="3" width="13" height="1" fill="#000"/><rect x="0" y="4" width="1" height="1" fill="#000"/><rect x="1" y="4" width="11" height="1" fill="#00FF00"/><rect x="12" y="4" width="1" height="1" fill="#000"/><rect x="0" y="5" width="1" height="1" fill="#000"/><rect x="1" y="5" width="1" height="1" fill="#00FF00"/><rect x="2" y="5" width="1" height="1" fill="#000"/><rect x="3" y="5" width="1" height="1" fill="#00FF00"/><rect x="4" y="5" width="3" height="1" fill="#000"/><rect x="7" y="5" width="1" height="1" fill="#00FF00"/><rect x="8" y="5" width="3" height="1" fill="#000"/><rect x="11" y="5" width="1" height="1" fill="#00FF00"/><rect x="12" y="5" width="2" height="1" fill="#000"/><rect x="0" y="6" width="1" height="1" fill="#000"/><rect x="1" y="6" width="1" height="1" fill="#00FF00"/><rect x="2" y="6" width="1" height="1" fill="#000"/><rect x="3" y="6" width="1" height="1" fill="#00FF00"/><rect x="4" y="6" width="1" height="1" fill="#000"/><rect x="5" y="6" width="1" height="1" fill="#00FF00"/><rect x="6" y="6" width="1" height="1" fill="#000"/><rect x="7" y="6" width="1" height="1" fill="#00FF00"/><rect x="8" y="6" width="1" height="1" fill="#000"/><rect x="9" y="6" width="1" height="1" fill="#00FF00"/><rect x="10" y="6" width="1" height="1" fill="#000"/><rect x="11" y="6" width="1" height="1" fill="#00FF00"/><rect x="12" y="6" width="1" height="1" fill="#000"/><rect x="13" y="6" width="1" height="1" fill="#008000"/><rect x="14" y="6" width="1" height="1" fill="#000"/><rect x="0" y="7" width="1" height="1" fill="#000"/><rect x="1" y="7" width="1" height="1" fill="#00FF00"/><rect x="2" y="7" width="1" height="1" fill="#000"/><rect x="3" y="7" width="1" height="1" fill="#00FF00"/><rect x="4" y="7" width="1" height="1" fill="#000"/><rect x="5" y="7" width="1" height="1" fill="#00FF00"/><rect x="6" y="7" width="1" height="1" fill="#000"/><rect x="7" y="7" width="1" height="1" fill="#00FF00"/><rect x="8" y="7" width="1" height="1" fill="#000"/><rect x="9" y="7" width="1" height="1" fill="#00FF00"/><rect x="10" y="7" width="1" height="1" fill="#000"/><rect x="11" y="7" width="1" height="1" fill="#00FF00"/><rect x="12" y="7" width="1" height="1" fill="#000"/><rect x="13" y="7" width="1" height="1" fill="#008000"/><rect x="14" y="7" width="1" height="1" fill="#000"/><rect x="0" y="8" width="1" height="1" fill="#000"/><rect x="1" y="8" width="1" height="1" fill="#00FF00"/><rect x="2" y="8" width="1" height="1" fill="#000"/><rect x="3" y="8" width="1" height="1" fill="#00FF00"/><rect x="4" y="8" width="3" height="1" fill="#000"/><rect x="7" y="8" width="1" height="1" fill="#00FF00"/><rect x="8" y="8" width="3" height="1" fill="#000"/><rect x="11" y="8" width="1" height="1" fill="#00FF00"/><rect x="12" y="8" width="1" height="1" fill="#000"/><rect x="13" y="8" width="1" height="1" fill="#008000"/><rect x="14" y="8" width="1" height="1" fill="#000"/><rect x="0" y="9" width="1" height="1" fill="#000"/><rect x="1" y="9" width="11" height="1" fill="#00FF00"/><rect x="12" y="9" width="1" height="1" fill="#000"/><rect x="13" y="9" width="1" height="1" fill="#008000"/><rect x="14" y="9" width="1" height="1" fill="#000"/><rect x="0" y="10" width="13" height="1" fill="#000"/><rect x="13" y="10" width="1" height="1" fill="#008000"/><rect x="14" y="10" width="1" height="1" fill="#000"/><rect x="2" y="11" width="1" height="1" fill="#000"/><rect x="3" y="11" width="11" height="1" fill="#008000"/><rect x="14" y="11" width="1" height="1" fill="#000"/><rect x="2" y="12" width="13" height="1" fill="#000"/></svg>
<svg style="left:527px;top:44px" width="16" height="16" viewBox="0 0 16 16"><rect x="0" y="1" width="3" height="1" fill="#0000FF"/><rect x="3" y="1" width="1" height="1" fill="#000"/><rect x="14" y="1" width="2" height="1" fill="#000"/><rect x="0" y="2" width="3" height="1" fill="#0000FF"/><rect x="3" y="2" width="1" height="1" fill="#fff"/><rect x="4" y="2" width="1" height="1" fill="#000"/><rect x="13" y="2" width="1" height="1" fill="#000"/><rect x="14" y="2" width="1" height="1" fill="#fff"/><rect x="0" y="3" width="2" height="1" fill="#0000FF"/><rect x="2" y="3" width="2" height="1" fill="#fff"/><rect x="4" y="3" width="2" height="1" fill="#000"/><rect x="12" y="3" width="1" height="1" fill="#000"/><rect x="13" y="3" width="1" height="1" fill="#FFFF00"/><rect x="14" y="3" width="1" height="1" fill="#fff"/><rect x="0" y="4" width="1" height="1" fill="#0000FF"/><rect x="1" y="4" width="5" height="1" fill="#fff"/><rect x="6" y="4" width="2" height="1" fill="#000"/><rect x="9" y="4" width="4" height="1" fill="#000"/><rect x="13" y="4" width="1" height="1" fill="#fff"/><rect x="14" y="4" width="1" height="1" fill="#FFFF00"/><rect x="15" y="4" width="1" height="1" fill="#fff"/><rect x="0" y="5" width="1" height="1" fill="#000"/><rect x="1" y="5" width="7" height="1" fill="#fff"/><rect x="8" y="5" width="1" height="1" fill="#000"/><rect x="9" y="5" width="6" height="1" fill="#fff"/><rect x="15" y="5" width="1" height="1" fill="#FFFF00"/><rect x="1" y="6" width="1" height="1" fill="#000"/><rect x="2" y="6" width="5" height="1" fill="#fff"/><rect x="7" y="6" width="1" height="1" fill="#000"/><rect x="8" y="6" width="2" height="1" fill="#fff"/><rect x="10" y="6" width="2" height="1" fill="#000"/><rect x="12" y="6" width="3" height="1" fill="#fff"/><rect x="15" y="6" width="1" height="1" fill="#000"/><rect x="2" y="7" width="1" height="1" fill="#000"/><rect x="3" y="7" width="3" height="1" fill="#fff"/><rect x="6" y="7" width="3" height="1" fill="#000"/><rect x="9" y="7" width="3" height="1" fill="#fff"/><rect x="12" y="7" width="1" height="1" fill="#000"/><rect x="13" y="7" width="2" height="1" fill="#fff"/><rect x="15" y="7" width="1" height="1" fill="#000"/><rect x="3" y="8" width="1" height="1" fill="#000"/><rect x="4" y="8" width="1" height="1" fill="#fff"/><rect x="5" y="8" width="1" height="1" fill="#000"/><rect x="6" y="8" width="3" height="1" fill="#fff"/><rect x="9" y="8" width="2" height="1" fill="#000"/><rect x="11" y="8" width="2" height="1" fill="#fff"/><rect x="13" y="8" width="1" height="1" fill="#000"/><rect x="14" y="8" width="1" height="1" fill="#fff"/><rect x="15" y="8" width="1" height="1" fill="#000"/><rect x="3" y="9" width="2" height="1" fill="#000"/><rect x="5" y="9" width="1" height="1" fill="#fff"/><rect x="6" y="9" width="2" height="1" fill="#000"/><rect x="8" y="9" width="4" height="1" fill="#fff"/><rect x="12" y="9" width="1" height="1" fill="#000"/><rect x="13" y="9" width="1" height="1" fill="#fff"/><rect x="14" y="9" width="1" height="1" fill="#000"/><rect x="4" y="10" width="1" height="1" fill="#000"/><rect x="5" y="10" width="2" height="1" fill="#fff"/><rect x="7" y="10" width="2" height="1" fill="#000"/><rect x="9" y="10" width="4" height="1" fill="#fff"/><rect x="13" y="10" width="2" height="1" fill="#000"/><rect x="5" y="11" width="1" height="1" fill="#000"/><rect x="6" y="11" width="3" height="1" fill="#fff"/><rect x="9" y="11" width="2" height="1" fill="#000"/><rect x="11" y="11" width="2" height="1" fill="#fff"/><rect x="13" y="11" width="1" height="1" fill="#000"/><rect x="6" y="12" width="1" height="1" fill="#000"/><rect x="7" y="12" width="4" height="1" fill="#fff"/><rect x="11" y="12" width="2" height="1" fill="#000"/><rect x="7" y="13" width="5" height="1" fill="#000"/></svg>
<svg style="left:27px;top:83px" width="16" height="16" viewBox="0 0 16 16"><rect x="7" y="2" width="1" height="1" fill="#000"/><rect x="5" y="3" width="2" height="1" fill="#000"/><rect x="7" y="3" width="1" height="1" fill="#00FF00"/><rect x="8" y="3" width="2" height="1" fill="#000"/><rect x="3" y="4" width="2" height="1" fill="#000"/><rect x="5" y="4" width="5" height="1" fill="#00FF00"/><rect x="10" y="4" width="2" height="1" fill="#000"/><rect x="1" y="5" width="2" height="1" fill="#000"/><rect x="3" y="5" width="9" height="1" fill="#00FF00"/><rect x="12" y="5" width="2" height="1" fill="#000"/><rect x="1" y="6" width="4" height="1" fill="#000"/><rect x="5" y="6" width="5" height="1" fill="#00FF00"/><rect x="10" y="6" width="4" height="1" fill="#000"/><rect x="1" y="7" width="4" height="1" fill="#000"/><rect x="5" y="7" width="5" height="1" fill="#00FF00"/><rect x="10" y="7" width="4" height="1" fill="#000"/><rect x="4" y="8" width="1" height="1" fill="#000"/><rect x="5" y="8" width="5" height="1" fill="#00FF00"/><rect x="10" y="8" width="1" height="1" fill="#000"/><rect x="4" y="9" width="1" height="1" fill="#000"/><rect x="5" y="9" width="5" height="1" fill="#00FF00"/><rect x="10" y="9" width="1" height="1" fill="#000"/><rect x="3" y="10" width="1" height="1" fill="#000"/><rect x="4" y="10" width="7" height="1" fill="#00FF00"/><rect x="11" y="10" width="1" height="1" fill="#000"/><rect x="2" y="11" width="1" height="1" fill="#000"/><rect x="3" y="11" width="9" height="1" fill="#00FF00"/><rect x="12" y="11" width="1" height="1" fill="#000"/><rect x="1" y="12" width="1" height="1" fill="#000"/><rect x="2" y="12" width="11" height="1" fill="#00FF00"/><rect x="13" y="12" width="1" height="1" fill="#000"/><rect x="1" y="13" width="13" height="1" fill="#000"/><rect x="1" y="14" width="13" height="1" fill="#000"/></svg>
<svg style="left:77px;top:83px" width="16" height="16" viewBox="0 0 16 16"><rect x="3" y="1" width="1" height="1" fill="#808080"/><rect x="0" y="2" width="1" height="1" fill="#808080"/><rect x="3" y="2" width="1" height="1" fill="#808080"/><rect x="6" y="2" width="1" height="1" fill="#808080"/><rect x="1" y="3" width="1" height="1" fill="#808080"/><rect x="3" y="3" width="1" height="1" fill="#808080"/><rect x="4" y="3" width="1" height="1" fill="#fff"/><rect x="5" y="3" width="1" height="1" fill="#808080"/><rect x="2" y="4" width="1" height="1" fill="#808080"/><rect x="3" y="4" width="3" height="1" fill="#fff"/><rect x="6" y="4" width="4" height="1" fill="#000"/><rect x="10" y="4" width="1" height="1" fill="#00FF00"/><rect x="11" y="4" width="1" height="1" fill="#000"/><rect x="0" y="5" width="2" height="1" fill="#808080"/><rect x="2" y="5" width="3" height="1" fill="#fff"/><rect x="5" y="5" width="1" height="1" fill="#808080"/><rect x="6" y="5" width="3" height="1" fill="#fff"/><rect x="9" y="5" width="1" height="1" fill="#000"/><rect x="10" y="5" width="2" height="1" fill="#00FF00"/><rect x="12" y="5" width="1" height="1" fill="#000"/><rect x="2" y="6" width="2" height="1" fill="#fff"/><rect x="4" y="6" width="1" height="1" fill="#808080"/><rect x="5" y="6" width="4" height="1" fill="#fff"/><rect x="9" y="6" width="1" height="1" fill="#000"/><rect x="10" y="6" width="3" height="1" fill="#00FF00"/><rect x="13" y="6" width="1" height="1" fill="#000"/><rect x="1" y="7" width="1" height="1" fill="#808080"/><rect x="3" y="7" width="1" height="1" fill="#808080"/><rect x="4" y="7" width="1" height="1" fill="#fff"/><rect x="6" y="7" width="1" height="1" fill="#808080"/><rect x="7" y="7" width="2" height="1" fill="#fff"/><rect x="9" y="7" width="5" height="1" fill="#000"/><rect x="14" y="7" width="1" height="1" fill="#808080"/><rect x="3" y="8" width="1" height="1" fill="#808080"/><rect x="5" y="8" width="2" height="1" fill="#fff"/><rect x="7" y="8" width="1" height="1" fill="#808080"/><rect x="8" y="8" width="5" height="1" fill="#fff"/><rect x="13" y="8" width="1" height="1" fill="#000"/><rect x="14" y="8" width="1" height="1" fill="#808080"/><rect x="4" y="9" width="1" height="1" fill="#000"/><rect x="5" y="9" width="8" height="1" fill="#fff"/><rect x="13" y="9" width="1" height="1" fill="#000"/><rect x="14" y="9" width="1" height="1" fill="#808080"/><rect x="4" y="10" width="1" height="1" fill="#000"/><rect x="5" y="10" width="8" height="1" fill="#fff"/><rect x="13" y="10" width="1" height="1" fill="#000"/><rect x="14" y="10" width="1" height="1" fill="#808080"/><rect x="4" y="11" width="1" height="1" fill="#000"/><rect x="5" y="11" width="8" height="1" fill="#fff"/><rect x="13" y="11" width="1" height="1" fill="#000"/><rect x="14" y="11" width="1" height="1" fill="#808080"/><rect x="4" y="12" width="1" height="1" fill="#000"/><rect x="5" y="12" width="8" height="1" fill="#fff"/><rect x="13" y="12" width="1" height="1" fill="#000"/><rect x="14" y="12" width="1" height="1" fill="#808080"/><rect x="4" y="13" width="1" height="1" fill="#000"/><rect x="5" y="13" width="8" height="1" fill="#fff"/><rect x="13" y="13" width="1" height="1" fill="#000"/><rect x="14" y="13" width="1" height="1" fill="#808080"/><rect x="4" y="14" width="10" height="1" fill="#000"/><rect x="14" y="14" width="1" height="1" fill="#808080"/><rect x="5" y="15" width="10" height="1" fill="#808080"/></svg>
<svg style="left:127px;top:83px" width="16" height="16" viewBox="0 0 16 16"><rect x="2" y="1" width="2" height="1" fill="#808080"/><rect x="4" y="1" width="1" height="1" fill="#000"/><rect x="5" y="1" width="1" height="1" fill="#FFFF00"/><rect x="6" y="1" width="3" height="1" fill="#FF0000"/><rect x="9" y="1" width="1" height="1" fill="#FFFF00"/><rect x="10" y="1" width="2" height="1" fill="#FF0000"/><rect x="12" y="1" width="1" height="1" fill="#FFFF00"/><rect x="13" y="1" width="1" height="1" fill="#000"/><rect x="2" y="2" width="1" height="1" fill="#808080"/><rect x="3" y="2" width="2" height="1" fill="#fff"/><rect x="5" y="2" width="2" height="1" fill="#000"/><rect x="7" y="2" width="3" height="1" fill="#FFFF00"/><rect x="10" y="2" width="3" height="1" fill="#000"/><rect x="2" y="3" width="1" height="1" fill="#808080"/><rect x="3" y="3" width="3" height="1" fill="#fff"/><rect x="6" y="3" width="1" height="1" fill="#000"/><rect x="7" y="3" width="4" height="1" fill="#FFFF00"/><rect x="11" y="3" width="2" height="1" fill="#000"/><rect x="2" y="4" width="1" height="1" fill="#808080"/><rect x="3" y="4" width="2" height="1" fill="#fff"/><rect x="5" y="4" width="1" height="1" fill="#000"/><rect x="6" y="4" width="7" height="1" fill="#FFFF00"/><rect x="13" y="4" width="2" height="1" fill="#000"/><rect x="2" y="5" width="1" height="1" fill="#808080"/><rect x="3" y="5" width="4" height="1" fill="#000"/><rect x="7" y="5" width="4" height="1" fill="#FFFF00"/><rect x="11" y="5" width="3" height="1" fill="#000"/><rect x="1" y="6" width="1" height="1" fill="#C0C0C0"/><rect x="2" y="6" width="3" height="1" fill="#00FFFF"/><rect x="5" y="6" width="1" height="1" fill="#000"/><rect x="6" y="6" width="1" height="1" fill="#fff"/><rect x="7" y="6" width="1" height="1" fill="#000"/><rect x="8" y="6" width="3" height="1" fill="#FFFF00"/><rect x="11" y="6" width="2" height="1" fill="#000"/><rect x="0" y="7" width="1" height="1" fill="#C0C0C0"/><rect x="1" y="7" width="4" height="1" fill="#00FFFF"/><rect x="5" y="7" width="1" height="1" fill="#C0C0C0"/><rect x="6" y="7" width="2" height="1" fill="#fff"/><rect x="8" y="7" width="1" height="1" fill="#000"/><rect x="9" y="7" width="1" height="1" fill="#FFFF00"/><rect x="10" y="7" width="2" height="1" fill="#000"/><rect x="0" y="8" width="1" height="1" fill="#C0C0C0"/><rect x="1" y="8" width="5" height="1" fill="#00FFFF"/><rect x="6" y="8" width="2" height="1" fill="#fff"/><rect x="8" y="8" width="3" height="1" fill="#000"/><rect x="0" y="9" width="1" height="1" fill="#C0C0C0"/><rect x="1" y="9" width="4" height="1" fill="#00FFFF"/><rect x="5" y="9" width="1" height="1" fill="#C0C0C0"/><rect x="6" y="9" width="1" height="1" fill="#fff"/><rect x="7" y="9" width="2" height="1" fill="#000"/><rect x="1" y="10" width="1" height="1" fill="#C0C0C0"/><rect x="2" y="10" width="3" height="1" fill="#00FFFF"/><rect x="5" y="10" width="1" height="1" fill="#C0C0C0"/><rect x="6" y="10" width="1" height="1" fill="#000"/><rect x="11" y="10" width="2" height="1" fill="#fff"/><rect x="13" y="10" width="1" height="1" fill="#000"/><rect x="2" y="11" width="1" height="1" fill="#808080"/><rect x="3" y="11" width="2" height="1" fill="#000"/><rect x="5" y="11" width="1" height="1" fill="#fff"/><rect x="6" y="11" width="2" height="1" fill="#0000FF"/><rect x="8" y="11" width="1" height="1" fill="#fff"/><rect x="11" y="11" width="2" height="1" fill="#fff"/><rect x="13" y="11" width="1" height="1" fill="#000"/><rect x="2" y="12" width="1" height="1" fill="#808080"/><rect x="3" y="12" width="3" height="1" fill="#fff"/><rect x="6" y="12" width="1" height="1" fill="#0000FF"/><rect x="7" y="12" width="1" height="1" fill="#00FFFF"/><rect x="8" y="12" width="1" height="1" fill="#0000FF"/><rect x="9" y="12" width="1" height="1" fill="#fff"/><rect x="11" y="12" width="2" height="1" fill="#fff"/><rect x="13" y="12" width="1" height="1" fill="#000"/><rect x="2" y="13" width="1" height="1" fill="#808080"/><rect x="3" y="13" width="4" height="1" fill="#fff"/><rect x="7" y="13" width="1" height="1" fill="#0000FF"/><rect x="8" y="13" width="1" height="1" fill="#00FFFF"/><rect x="9" y="13" width="1" height="1" fill="#0000FF"/><rect x="10" y="13" width="3" height="1" fill="#fff"/><rect x="13" y="13" width="1" height="1" fill="#000"/><rect x="2" y="14" width="6" height="1" fill="#000"/><rect x="8" y="14" width="1" height="1" fill="#0000FF"/><rect x="9" y="14" width="1" height="1" fill="#00FFFF"/><rect x="10" y="14" width="1" height="1" fill="#0000FF"/><rect x="11" y="14" width="3" height="1" fill="#000"/><rect x="9" y="15" width="2" height="1" fill="#0000FF"/><rect x="11" y="15" width="1" height="1" fill="#000"/></svg>
<svg style="left:177px;top:83px" width="16" height="16" viewBox="0 0 16 16"><rect x="2" y="2" width="9" height="1" fill="#000"/><rect x="2" y="3" width="1" height="1" fill="#000"/><rect x="3" y="3" width="6" height="1" fill="#fff"/><rect x="9" y="3" width="1" height="1" fill="#000"/><rect x="10" y="3" width="1" height="1" fill="#fff"/><rect x="11" y="3" width="1" height="1" fill="#00FF00"/><rect x="12" y="3" width="1" height="1" fill="#000"/><rect x="2" y="4" width="1" height="1" fill="#000"/><rect x="3" y="4" width="5" height="1" fill="#fff"/><rect x="8" y="4" width="1" height="1" fill="#FFFF00"/><rect x="9" y="4" width="2" height="1" fill="#000"/><rect x="11" y="4" width="2" height="1" fill="#00FF00"/><rect x="13" y="4" width="1" height="1" fill="#000"/><rect x="2" y="5" width="1" height="1" fill="#000"/><rect x="3" y="5" width="4" height="1" fill="#fff"/><rect x="7" y="5" width="2" height="1" fill="#FFFF00"/><rect x="9" y="5" width="1" height="1" fill="#FF0000"/><rect x="10" y="5" width="1" height="1" fill="#000"/><rect x="11" y="5" width="3" height="1" fill="#00FF00"/><rect x="14" y="5" width="1" height="1" fill="#000"/><rect x="2" y="6" width="1" height="1" fill="#000"/><rect x="3" y="6" width="3" height="1" fill="#fff"/><rect x="6" y="6" width="2" height="1" fill="#FFFF00"/><rect x="8" y="6" width="1" height="1" fill="#FF0000"/><rect x="9" y="6" width="1" height="1" fill="#fff"/><rect x="10" y="6" width="1" height="1" fill="#FF0000"/><rect x="11" y="6" width="4" height="1" fill="#000"/><rect x="2" y="7" width="1" height="1" fill="#000"/><rect x="3" y="7" width="2" height="1" fill="#fff"/><rect x="5" y="7" width="2" height="1" fill="#FFFF00"/><rect x="7" y="7" width="1" height="1" fill="#FF0000"/><rect x="8" y="7" width="1" height="1" fill="#000"/><rect x="9" y="7" width="1" height="1" fill="#fff"/><rect x="10" y="7" width="1" height="1" fill="#000"/><rect x="11" y="7" width="1" height="1" fill="#FF0000"/><rect x="12" y="7" width="1" height="1" fill="#fff"/><rect x="13" y="7" width="1" height="1" fill="#000"/><rect x="2" y="8" width="1" height="1" fill="#000"/><rect x="3" y="8" width="1" height="1" fill="#fff"/><rect x="4" y="8" width="2" height="1" fill="#FFFF00"/><rect x="6" y="8" width="1" height="1" fill="#FF0000"/><rect x="7" y="8" width="1" height="1" fill="#fff"/><rect x="8" y="8" width="1" height="1" fill="#000"/><rect x="9" y="8" width="1" height="1" fill="#fff"/><rect x="10" y="8" width="1" height="1" fill="#000"/><rect x="11" y="8" width="1" height="1" fill="#fff"/><rect x="12" y="8" width="1" height="1" fill="#FF0000"/><rect x="13" y="8" width="1" height="1" fill="#000"/><rect x="2" y="9" width="1" height="1" fill="#000"/><rect x="3" y="9" width="2" height="1" fill="#FFFF00"/><rect x="5" y="9" width="1" height="1" fill="#FF0000"/><rect x="6" y="9" width="1" height="1" fill="#000"/><rect x="7" y="9" width="1" height="1" fill="#fff"/><rect x="8" y="9" width="1" height="1" fill="#000"/><rect x="9" y="9" width="1" height="1" fill="#fff"/><rect x="10" y="9" width="1" height="1" fill="#000"/><rect x="11" y="9" width="1" height="1" fill="#fff"/><rect x="12" y="9" width="1" height="1" fill="#000"/><rect x="13" y="9" width="1" height="1" fill="#FF0000"/><rect x="1" y="10" width="1" height="1" fill="#000"/><rect x="2" y="10" width="2" height="1" fill="#FFFF00"/><rect x="4" y="10" width="1" height="1" fill="#FF0000"/><rect x="5" y="10" width="1" height="1" fill="#fff"/><rect x="6" y="10" width="1" height="1" fill="#000"/><rect x="7" y="10" width="1" height="1" fill="#fff"/><rect x="8" y="10" width="1" height="1" fill="#000"/><rect x="9" y="10" width="1" height="1" fill="#fff"/><rect x="10" y="10" width="1" height="1" fill="#000"/><rect x="11" y="10" width="1" height="1" fill="#fff"/><rect x="12" y="10" width="1" height="1" fill="#000"/><rect x="13" y="10" width="1" height="1" fill="#fff"/><rect x="14" y="10" width="1" height="1" fill="#FF0000"/><rect x="0" y="11" width="1" height="1" fill="#000"/><rect x="1" y="11" width="2" height="1" fill="#FFFF00"/><rect x="3" y="11" width="1" height="1" fill="#000"/><rect x="4" y="11" width="1" height="1" fill="#FF0000"/><rect x="5" y="11" width="1" height="1" fill="#000"/><rect x="6" y="11" width="1" height="1" fill="#fff"/><rect x="7" y="11" width="1" height="1" fill="#000"/><rect x="8" y="11" width="1" height="1" fill="#fff"/><rect x="9" y="11" width="1" height="1" fill="#000"/><rect x="10" y="11" width="1" height="1" fill="#fff"/><rect x="11" y="11" width="1" height="1" fill="#000"/><rect x="12" y="11" width="1" height="1" fill="#fff"/><rect x="13" y="11" width="1" height="1" fill="#FF0000"/><rect x="0" y="12" width="2" height="1" fill="#FFFF00"/><rect x="2" y="12" width="1" height="1" fill="#000"/><rect x="3" y="12" width="2" height="1" fill="#fff"/><rect x="5" y="12" width="1" height="1" fill="#FF0000"/><rect x="6" y="12" width="1" height="1" fill="#fff"/><rect x="7" y="12" width="1" height="1" fill="#000"/><rect x="8" y="12" width="1" height="1" fill="#fff"/><rect x="9" y="12" width="1" height="1" fill="#000"/><rect x="10" y="12" width="1" height="1" fill="#fff"/><rect x="11" y="12" width="1" height="1" fill="#000"/><rect x="12" y="12" width="1" height="1" fill="#FF0000"/><rect x="0" y="13" width="1" height="1" fill="#000"/><rect x="2" y="13" width="1" height="1" fill="#000"/><rect x="3" y="13" width="3" height="1" fill="#fff"/><rect x="6" y="13" width="1" height="1" fill="#FF0000"/><rect x="7" y="13" width="1" height="1" fill="#000"/><rect x="8" y="13" width="1" height="1" fill="#fff"/><rect x="9" y="13" width="1" height="1" fill="#000"/><rect x="10" y="13" width="1" height="1" fill="#fff"/><rect x="11" y="13" width="1" height="1" fill="#FF0000"/><rect x="2" y="14" width="1" height="1" fill="#000"/><rect x="3" y="14" width="4" height="1" fill="#fff"/><rect x="7" y="14" width="1" height="1" fill="#FF0000"/><rect x="8" y="14" width="1" height="1" fill="#fff"/><rect x="9" y="14" width="1" height="1" fill="#000"/><rect x="10" y="14" width="1" height="1" fill="#FF0000"/><rect x="2" y="15" width="6" height="1" fill="#000"/><rect x="8" y="15" width="2" height="1" fill="#FF0000"/></svg>
<svg style="left:227px;top:83px" width="16" height="16" viewBox="0 0 16 16"><rect x="0" y="4" width="15" height="1" fill="#000"/><rect x="0" y="5" width="1" height="1" fill="#000"/><rect x="1" y="5" width="13" height="1" fill="#fff"/><rect x="14" y="5" width="1" height="1" fill="#000"/><rect x="0" y="6" width="1" height="1" fill="#000"/><rect x="1" y="6" width="1" height="1" fill="#fff"/><rect x="2" y="6" width="4" height="1" fill="#000"/><rect x="6" y="6" width="5" height="1" fill="#fff"/><rect x="11" y="6" width="2" height="1" fill="#000"/><rect x="13" y="6" width="1" height="1" fill="#fff"/><rect x="14" y="6" width="1" height="1" fill="#000"/><rect x="0" y="7" width="1" height="1" fill="#000"/><rect x="1" y="7" width="10" height="1" fill="#fff"/><rect x="11" y="7" width="2" height="1" fill="#000"/><rect x="13" y="7" width="1" height="1" fill="#fff"/><rect x="14" y="7" width="1" height="1" fill="#000"/><rect x="0" y="8" width="1" height="1" fill="#000"/><rect x="1" y="8" width="13" height="1" fill="#fff"/><rect x="14" y="8" width="1" height="1" fill="#000"/><rect x="0" y="9" width="1" height="1" fill="#000"/><rect x="1" y="9" width="4" height="1" fill="#fff"/><rect x="5" y="9" width="6" height="1" fill="#000"/><rect x="11" y="9" width="3" height="1" fill="#fff"/><rect x="14" y="9" width="1" height="1" fill="#000"/><rect x="0" y="10" width="1" height="1" fill="#000"/><rect x="1" y="10" width="13" height="1" fill="#fff"/><rect x="14" y="10" width="1" height="1" fill="#000"/><rect x="0" y="11" width="1" height="1" fill="#000"/><rect x="1" y="11" width="4" height="1" fill="#fff"/><rect x="5" y="11" width="5" height="1" fill="#000"/><rect x="10" y="11" width="4" height="1" fill="#fff"/><rect x="14" y="11" width="1" height="1" fill="#000"/><rect x="0" y="12" width="1" height="1" fill="#000"/><rect x="1" y="12" width="13" height="1" fill="#fff"/><rect x="14" y="12" width="1" height="1" fill="#000"/><rect x="0" y="13" width="15" height="1" fill="#000"/></svg>
<svg style="left:277px;top:83px" width="16" height="16" viewBox="0 0 16 16"><rect x="4" y="1" width="2" height="1" fill="#0000FF"/><rect x="12" y="1" width="1" height="1" fill="#000"/><rect x="4" y="2" width="2" height="1" fill="#0000FF"/><rect x="11" y="2" width="3" height="1" fill="#000"/><rect x="3" y="3" width="4" height="1" fill="#0000FF"/><rect x="10" y="3" width="5" height="1" fill="#000"/><rect x="3" y="4" width="1" height="1" fill="#0000FF"/><rect x="4" y="4" width="2" height="1" fill="#fff"/><rect x="6" y="4" width="1" height="1" fill="#0000FF"/><rect x="11" y="4" width="2" height="1" fill="#000"/><rect x="2" y="5" width="6" height="1" fill="#0000FF"/><rect x="11" y="5" width="2" height="1" fill="#000"/><rect x="2" y="6" width="2" height="1" fill="#0000FF"/><rect x="6" y="6" width="2" height="1" fill="#0000FF"/><rect x="11" y="6" width="2" height="1" fill="#000"/><rect x="1" y="7" width="3" height="1" fill="#0000FF"/><rect x="6" y="7" width="3" height="1" fill="#0000FF"/><rect x="11" y="7" width="2" height="1" fill="#000"/><rect x="11" y="8" width="2" height="1" fill="#000"/><rect x="2" y="9" width="6" height="1" fill="#800000"/><rect x="11" y="9" width="2" height="1" fill="#000"/><rect x="2" y="10" width="1" height="1" fill="#800000"/><rect x="6" y="10" width="2" height="1" fill="#800000"/><rect x="11" y="10" width="2" height="1" fill="#000"/><rect x="5" y="11" width="2" height="1" fill="#800000"/><rect x="11" y="11" width="2" height="1" fill="#000"/><rect x="4" y="12" width="2" height="1" fill="#800000"/><rect x="10" y="12" width="5" height="1" fill="#000"/><rect x="3" y="13" width="2" height="1" fill="#800000"/><rect x="11" y="13" width="3" height="1" fill="#000"/><rect x="2" y="14" width="6" height="1" fill="#800000"/><rect x="12" y="14" width="1" height="1" fill="#000"/></svg>
<svg style="left:327px;top:83px" width="16" height="16" viewBox="0 0 16 16"><rect x="2" y="2" width="12" height="1" fill="#FF0000"/><rect x="1" y="3" width="1" height="1" fill="#0000FF"/><rect x="2" y="3" width="12" height="1" fill="#C0C0C0"/><rect x="14" y="3" width="1" height="1" fill="#0000FF"/><rect x="1" y="4" width="1" height="1" fill="#0000FF"/><rect x="2" y="4" width="1" height="1" fill="#C0C0C0"/><rect x="3" y="4" width="2" height="1" fill="#000"/><rect x="5" y="4" width="2" height="1" fill="#C0C0C0"/><rect x="7" y="4" width="2" height="1" fill="#000"/><rect x="9" y="4" width="2" height="1" fill="#C0C0C0"/><rect x="11" y="4" width="2" height="1" fill="#000"/><rect x="13" y="4" width="1" height="1" fill="#C0C0C0"/><rect x="14" y="4" width="1" height="1" fill="#0000FF"/><rect x="1" y="5" width="1" height="1" fill="#0000FF"/><rect x="2" y="5" width="12" height="1" fill="#C0C0C0"/><rect x="14" y="5" width="1" height="1" fill="#0000FF"/><rect x="1" y="6" width="1" height="1" fill="#0000FF"/><rect x="2" y="6" width="4" height="1" fill="#fff"/><rect x="6" y="6" width="1" height="1" fill="#808080"/><rect x="7" y="6" width="4" height="1" fill="#fff"/><rect x="11" y="6" width="1" height="1" fill="#808080"/><rect x="12" y="6" width="2" height="1" fill="#fff"/><rect x="14" y="6" width="1" height="1" fill="#0000FF"/><rect x="1" y="7" width="1" height="1" fill="#0000FF"/><rect x="2" y="7" width="4" height="1" fill="#00FF00"/><rect x="6" y="7" width="1" height="1" fill="#808080"/><rect x="7" y="7" width="4" height="1" fill="#00FF00"/><rect x="11" y="7" width="1" height="1" fill="#808080"/><rect x="12" y="7" width="2" height="1" fill="#00FF00"/><rect x="14" y="7" width="1" height="1" fill="#0000FF"/><rect x="1" y="8" width="1" height="1" fill="#0000FF"/><rect x="2" y="8" width="4" height="1" fill="#fff"/><rect x="6" y="8" width="1" height="1" fill="#808080"/><rect x="7" y="8" width="4" height="1" fill="#fff"/><rect x="11" y="8" width="1" height="1" fill="#808080"/><rect x="12" y="8" width="2" height="1" fill="#fff"/><rect x="14" y="8" width="1" height="1" fill="#0000FF"/><rect x="1" y="9" width="1" height="1" fill="#0000FF"/><rect x="2" y="9" width="4" height="1" fill="#000"/><rect x="6" y="9" width="1" height="1" fill="#808080"/><rect x="7" y="9" width="4" height="1" fill="#000"/><rect x="11" y="9" width="1" height="1" fill="#808080"/><rect x="12" y="9" width="2" height="1" fill="#000"/><rect x="14" y="9" width="1" height="1" fill="#0000FF"/><rect x="1" y="10" width="1" height="1" fill="#0000FF"/><rect x="2" y="10" width="4" height="1" fill="#fff"/><rect x="6" y="10" width="1" height="1" fill="#808080"/><rect x="7" y="10" width="4" height="1" fill="#fff"/><rect x="11" y="10" width="1" height="1" fill="#808080"/><rect x="12" y="10" width="2" height="1" fill="#fff"/><rect x="14" y="10" width="1" height="1" fill="#0000FF"/><rect x="1" y="11" width="1" height="1" fill="#0000FF"/><rect x="2" y="11" width="4" height="1" fill="#000"/><rect x="6" y="11" width="1" height="1" fill="#808080"/><rect x="7" y="11" width="4" height="1" fill="#000"/><rect x="11" y="11" width="1" height="1" fill="#808080"/><rect x="12" y="11" width="2" height="1" fill="#000"/><rect x="14" y="11" width="1" height="1" fill="#0000FF"/><rect x="1" y="12" width="1" height="1" fill="#0000FF"/><rect x="2" y="12" width="4" height="1" fill="#fff"/><rect x="6" y="12" width="1" height="1" fill="#808080"/><rect x="7" y="12" width="4" height="1" fill="#fff"/><rect x="11" y="12" width="1" height="1" fill="#808080"/><rect x="12" y="12" width="2" height="1" fill="#fff"/><rect x="14" y="12" width="1" height="1" fill="#0000FF"/><rect x="1" y="13" width="14" height="1" fill="#0000FF"/><rect x="2" y="14" width="13" height="1" fill="#808080"/></svg>
<svg style="left:377px;top:83px" width="16" height="16" viewBox="0 0 16 16"><rect x="0" y="2" width="9" height="1" fill="#000"/><rect x="0" y="3" width="1" height="1" fill="#000"/><rect x="1" y="3" width="6" height="1" fill="#fff"/><rect x="7" y="3" width="1" height="1" fill="#000"/><rect x="8" y="3" width="1" height="1" fill="#00FF00"/><rect x="9" y="3" width="1" height="1" fill="#000"/><rect x="0" y="4" width="1" height="1" fill="#000"/><rect x="1" y="4" width="1" height="1" fill="#fff"/><rect x="2" y="4" width="3" height="1" fill="#000"/><rect x="5" y="4" width="2" height="1" fill="#fff"/><rect x="7" y="4" width="1" height="1" fill="#000"/><rect x="8" y="4" width="2" height="1" fill="#00FF00"/><rect x="10" y="4" width="1" height="1" fill="#000"/><rect x="0" y="5" width="1" height="1" fill="#000"/><rect x="1" y="5" width="6" height="1" fill="#fff"/><rect x="7" y="5" width="5" height="1" fill="#000"/><rect x="13" y="5" width="2" height="1" fill="#000"/><rect x="0" y="6" width="1" height="1" fill="#000"/><rect x="1" y="6" width="1" height="1" fill="#fff"/><rect x="2" y="6" width="4" height="1" fill="#000"/><rect x="6" y="6" width="1" height="1" fill="#fff"/><rect x="7" y="6" width="2" height="1" fill="#000"/><rect x="9" y="6" width="2" height="1" fill="#fff"/><rect x="11" y="6" width="4" height="1" fill="#000"/><rect x="0" y="7" width="1" height="1" fill="#000"/><rect x="1" y="7" width="6" height="1" fill="#fff"/><rect x="7" y="7" width="2" height="1" fill="#000"/><rect x="9" y="7" width="2" height="1" fill="#fff"/><rect x="11" y="7" width="4" height="1" fill="#000"/><rect x="0" y="8" width="1" height="1" fill="#000"/><rect x="1" y="8" width="1" height="1" fill="#fff"/><rect x="2" y="8" width="14" height="1" fill="#000"/><rect x="0" y="9" width="1" height="1" fill="#000"/><rect x="1" y="9" width="4" height="1" fill="#fff"/><rect x="5" y="9" width="11" height="1" fill="#000"/><rect x="0" y="10" width="1" height="1" fill="#000"/><rect x="1" y="10" width="1" height="1" fill="#fff"/><rect x="2" y="10" width="4" height="1" fill="#000"/><rect x="6" y="10" width="1" height="1" fill="#fff"/><rect x="7" y="10" width="4" height="1" fill="#000"/><rect x="11" y="10" width="1" height="1" fill="#fff"/><rect x="12" y="10" width="4" height="1" fill="#000"/><rect x="0" y="11" width="1" height="1" fill="#000"/><rect x="1" y="11" width="4" height="1" fill="#fff"/><rect x="5" y="11" width="1" height="1" fill="#000"/><rect x="6" y="11" width="1" height="1" fill="#fff"/><rect x="7" y="11" width="4" height="1" fill="#000"/><rect x="11" y="11" width="1" height="1" fill="#fff"/><rect x="12" y="11" width="4" height="1" fill="#000"/><rect x="0" y="12" width="1" height="1" fill="#000"/><rect x="1" y="12" width="1" height="1" fill="#fff"/><rect x="2" y="12" width="14" height="1" fill="#000"/><rect x="0" y="13" width="1" height="1" fill="#000"/><rect x="1" y="13" width="4" height="1" fill="#fff"/><rect x="5" y="13" width="5" height="1" fill="#000"/><rect x="11" y="13" width="5" height="1" fill="#000"/><rect x="0" y="14" width="6" height="1" fill="#000"/><rect x="6" y="14" width="1" height="1" fill="#fff"/><rect x="7" y="14" width="6" height="1" fill="#000"/><rect x="13" y="14" width="1" height="1" fill="#fff"/><rect x="14" y="14" width="2" height="1" fill="#000"/><rect x="6" y="15" width="3" height="1" fill="#000"/><rect x="12" y="15" width="3" height="1" fill="#000"/></svg>
<svg style="left:427px;top:83px" width="16" height="16" viewBox="0 0 16 16"><rect x="6" y="1" width="1" height="1" fill="#000"/><rect x="11" y="1" width="1" height="1" fill="#000"/><rect x="5" y="2" width="1" height="1" fill="#000"/><rect x="6" y="2" width="1" height="1" fill="#00FF00"/><rect x="7" y="2" width="1" height="1" fill="#000"/><rect x="10" y="2" width="1" height="1" fill="#000"/><rect x="11" y="2" width="1" height="1" fill="#FFFF00"/><rect x="12" y="2" width="1" height="1" fill="#000"/><rect x="4" y="3" width="1" height="1" fill="#000"/><rect x="5" y="3" width="3" height="1" fill="#00FF00"/><rect x="8" y="3" width="2" height="1" fill="#000"/><rect x="10" y="3" width="3" height="1" fill="#FFFF00"/><rect x="13" y="3" width="1" height="1" fill="#000"/><rect x="3" y="4" width="1" height="1" fill="#000"/><rect x="4" y="4" width="5" height="1" fill="#00FF00"/><rect x="9" y="4" width="5" height="1" fill="#000"/><rect x="2" y="5" width="9" height="1" fill="#000"/><rect x="5" y="6" width="1" height="1" fill="#000"/><rect x="12" y="6" width="4" height="1" fill="#000"/><rect x="4" y="7" width="1" height="1" fill="#000"/><rect x="5" y="7" width="1" height="1" fill="#00FF00"/><rect x="6" y="7" width="1" height="1" fill="#000"/><rect x="12" y="7" width="1" height="1" fill="#000"/><rect x="13" y="7" width="3" height="1" fill="#FF0000"/><rect x="3" y="8" width="1" height="1" fill="#000"/><rect x="4" y="8" width="3" height="1" fill="#00FF00"/><rect x="7" y="8" width="1" height="1" fill="#000"/><rect x="10" y="8" width="3" height="1" fill="#000"/><rect x="13" y="8" width="3" height="1" fill="#FF0000"/><rect x="2" y="9" width="1" height="1" fill="#000"/><rect x="3" y="9" width="5" height="1" fill="#00FF00"/><rect x="8" y="9" width="1" height="1" fill="#000"/><rect x="10" y="9" width="1" height="1" fill="#000"/><rect x="11" y="9" width="2" height="1" fill="#FF0000"/><rect x="13" y="9" width="1" height="1" fill="#000"/><rect x="14" y="9" width="2" height="1" fill="#FF0000"/><rect x="2" y="10" width="7" height="1" fill="#000"/><rect x="10" y="10" width="1" height="1" fill="#000"/><rect x="11" y="10" width="3" height="1" fill="#FF0000"/><rect x="14" y="10" width="2" height="1" fill="#000"/><rect x="5" y="11" width="1" height="1" fill="#000"/><rect x="8" y="11" width="4" height="1" fill="#000"/><rect x="12" y="11" width="2" height="1" fill="#FF0000"/><rect x="14" y="11" width="1" height="1" fill="#000"/><rect x="4" y="12" width="1" height="1" fill="#000"/><rect x="5" y="12" width="1" height="1" fill="#00FF00"/><rect x="6" y="12" width="1" height="1" fill="#000"/><rect x="8" y="12" width="1" height="1" fill="#000"/><rect x="9" y="12" width="3" height="1" fill="#FF0000"/><rect x="12" y="12" width="3" height="1" fill="#000"/><rect x="3" y="13" width="1" height="1" fill="#000"/><rect x="4" y="13" width="3" height="1" fill="#00FF00"/><rect x="7" y="13" width="2" height="1" fill="#000"/><rect x="9" y="13" width="3" height="1" fill="#FF0000"/><rect x="12" y="13" width="1" height="1" fill="#000"/><rect x="2" y="14" width="1" height="1" fill="#000"/><rect x="3" y="14" width="5" height="1" fill="#00FF00"/><rect x="8" y="14" width="1" height="1" fill="#000"/><rect x="9" y="14" width="3" height="1" fill="#FF0000"/><rect x="12" y="14" width="1" height="1" fill="#000"/><rect x="2" y="15" width="11" height="1" fill="#000"/></svg>
<svg style="left:477px;top:83px" width="16" height="16" viewBox="0 0 16 16"><rect x="1" y="2" width="5" height="1" fill="#000"/><rect x="0" y="3" width="1" height="1" fill="#000"/><rect x="1" y="3" width="5" height="1" fill="#FF0000"/><rect x="6" y="3" width="1" height="1" fill="#000"/><rect x="9" y="3" width="5" height="1" fill="#000"/><rect x="0" y="4" width="1" height="1" fill="#000"/><rect x="1" y="4" width="1" height="1" fill="#FF0000"/><rect x="2" y="4" width="3" height="1" fill="#000"/><rect x="5" y="4" width="1" height="1" fill="#FF0000"/><rect x="6" y="4" width="1" height="1" fill="#000"/><rect x="8" y="4" width="2" height="1" fill="#000"/><rect x="10" y="4" width="4" height="1" fill="#00FFFF"/><rect x="14" y="4" width="1" height="1" fill="#000"/><rect x="0" y="5" width="3" height="1" fill="#000"/><rect x="4" y="5" width="1" height="1" fill="#000"/><rect x="5" y="5" width="1" height="1" fill="#FF0000"/><rect x="6" y="5" width="1" height="1" fill="#000"/><rect x="8" y="5" width="7" height="1" fill="#000"/><rect x="3" y="6" width="1" height="1" fill="#000"/><rect x="4" y="6" width="2" height="1" fill="#FF0000"/><rect x="6" y="6" width="1" height="1" fill="#000"/><rect x="8" y="6" width="1" height="1" fill="#000"/><rect x="9" y="6" width="1" height="1" fill="#fff"/><rect x="10" y="6" width="4" height="1" fill="#00FFFF"/><rect x="14" y="6" width="1" height="1" fill="#000"/><rect x="3" y="7" width="1" height="1" fill="#000"/><rect x="4" y="7" width="1" height="1" fill="#FF0000"/><rect x="5" y="7" width="1" height="1" fill="#000"/><rect x="8" y="7" width="1" height="1" fill="#000"/><rect x="9" y="7" width="1" height="1" fill="#fff"/><rect x="10" y="7" width="4" height="1" fill="#00FFFF"/><rect x="14" y="7" width="1" height="1" fill="#000"/><rect x="3" y="8" width="1" height="1" fill="#000"/><rect x="4" y="8" width="1" height="1" fill="#FF0000"/><rect x="5" y="8" width="1" height="1" fill="#000"/><rect x="8" y="8" width="1" height="1" fill="#000"/><rect x="9" y="8" width="1" height="1" fill="#fff"/><rect x="10" y="8" width="4" height="1" fill="#00FFFF"/><rect x="14" y="8" width="1" height="1" fill="#000"/><rect x="3" y="9" width="3" height="1" fill="#000"/><rect x="8" y="9" width="1" height="1" fill="#000"/><rect x="9" y="9" width="1" height="1" fill="#fff"/><rect x="10" y="9" width="4" height="1" fill="#00FFFF"/><rect x="14" y="9" width="1" height="1" fill="#000"/><rect x="8" y="10" width="1" height="1" fill="#000"/><rect x="9" y="10" width="1" height="1" fill="#fff"/><rect x="10" y="10" width="4" height="1" fill="#00FFFF"/><rect x="14" y="10" width="1" height="1" fill="#000"/><rect x="3" y="11" width="3" height="1" fill="#000"/><rect x="8" y="11" width="1" height="1" fill="#000"/><rect x="9" y="11" width="1" height="1" fill="#fff"/><rect x="10" y="11" width="4" height="1" fill="#00FFFF"/><rect x="14" y="11" width="1" height="1" fill="#000"/><rect x="3" y="12" width="1" height="1" fill="#000"/><rect x="4" y="12" width="1" height="1" fill="#FF0000"/><rect x="5" y="12" width="1" height="1" fill="#000"/><rect x="8" y="12" width="2" height="1" fill="#000"/><rect x="10" y="12" width="4" height="1" fill="#00FFFF"/><rect x="14" y="12" width="1" height="1" fill="#000"/><rect x="3" y="13" width="3" height="1" fill="#000"/><rect x="9" y="13" width="5" height="1" fill="#000"/></svg>
<svg style="left:527px;top:83px" width="16" height="16" viewBox="0 0 16 16"><rect x="3" y="1" width="4" height="1" fill="#000"/><rect x="2" y="2" width="1" height="1" fill="#000"/><rect x="3" y="2" width="4" height="1" fill="#FFFF00"/><rect x="7" y="2" width="5" height="1" fill="#000"/><rect x="1" y="3" width="1" height="1" fill="#000"/><rect x="2" y="3" width="1" height="1" fill="#FFFF00"/><rect x="3" y="3" width="1" height="1" fill="#000"/><rect x="4" y="3" width="4" height="1" fill="#FFFF00"/><rect x="8" y="3" width="1" height="1" fill="#000"/><rect x="9" y="3" width="1" height="1" fill="#fff"/><rect x="10" y="3" width="1" height="1" fill="#00FF00"/><rect x="11" y="3" width="1" height="1" fill="#000"/><rect x="1" y="4" width="1" height="1" fill="#000"/><rect x="2" y="4" width="2" height="1" fill="#FFFF00"/><rect x="4" y="4" width="1" height="1" fill="#000"/><rect x="5" y="4" width="3" height="1" fill="#FFFF00"/><rect x="8" y="4" width="1" height="1" fill="#000"/><rect x="9" y="4" width="1" height="1" fill="#fff"/><rect x="10" y="4" width="2" height="1" fill="#00FF00"/><rect x="12" y="4" width="1" height="1" fill="#000"/><rect x="14" y="4" width="2" height="1" fill="#FF0000"/><rect x="1" y="5" width="1" height="1" fill="#000"/><rect x="2" y="5" width="3" height="1" fill="#FFFF00"/><rect x="5" y="5" width="4" height="1" fill="#000"/><rect x="9" y="5" width="1" height="1" fill="#fff"/><rect x="10" y="5" width="3" height="1" fill="#00FF00"/><rect x="13" y="5" width="1" height="1" fill="#000"/><rect x="14" y="5" width="2" height="1" fill="#FF0000"/><rect x="1" y="6" width="1" height="1" fill="#000"/><rect x="2" y="6" width="6" height="1" fill="#FFFF00"/><rect x="8" y="6" width="5" height="1" fill="#000"/><rect x="13" y="6" width="1" height="1" fill="#FFFF00"/><rect x="14" y="6" width="2" height="1" fill="#FF0000"/><rect x="2" y="7" width="1" height="1" fill="#000"/><rect x="3" y="7" width="4" height="1" fill="#FFFF00"/><rect x="7" y="7" width="1" height="1" fill="#000"/><rect x="8" y="7" width="4" height="1" fill="#fff"/><rect x="12" y="7" width="1" height="1" fill="#FFFF00"/><rect x="13" y="7" width="1" height="1" fill="#000"/><rect x="14" y="7" width="1" height="1" fill="#FF0000"/><rect x="3" y="8" width="7" height="1" fill="#000"/><rect x="10" y="8" width="1" height="1" fill="#fff"/><rect x="11" y="8" width="2" height="1" fill="#FFFF00"/><rect x="13" y="8" width="1" height="1" fill="#000"/><rect x="3" y="9" width="1" height="1" fill="#000"/><rect x="4" y="9" width="6" height="1" fill="#fff"/><rect x="10" y="9" width="2" height="1" fill="#FFFF00"/><rect x="12" y="9" width="1" height="1" fill="#000"/><rect x="3" y="10" width="1" height="1" fill="#000"/><rect x="4" y="10" width="1" height="1" fill="#fff"/><rect x="5" y="10" width="2" height="1" fill="#000"/><rect x="7" y="10" width="2" height="1" fill="#fff"/><rect x="9" y="10" width="3" height="1" fill="#FFFF00"/><rect x="12" y="10" width="1" height="1" fill="#000"/><rect x="3" y="11" width="1" height="1" fill="#000"/><rect x="4" y="11" width="3" height="1" fill="#fff"/><rect x="7" y="11" width="1" height="1" fill="#000"/><rect x="8" y="11" width="3" height="1" fill="#FFFF00"/><rect x="11" y="11" width="1" height="1" fill="#000"/><rect x="3" y="12" width="1" height="1" fill="#000"/><rect x="4" y="12" width="1" height="1" fill="#fff"/><rect x="5" y="12" width="1" height="1" fill="#000"/><rect x="6" y="12" width="1" height="1" fill="#fff"/><rect x="7" y="12" width="2" height="1" fill="#000"/><rect x="9" y="12" width="1" height="1" fill="#FFFF00"/><rect x="10" y="12" width="1" height="1" fill="#000"/><rect x="3" y="13" width="1" height="1" fill="#000"/><rect x="4" y="13" width="3" height="1" fill="#fff"/><rect x="7" y="13" width="3" height="1" fill="#000"/><rect x="10" y="13" width="1" height="1" fill="#fff"/><rect x="12" y="13" width="1" height="1" fill="#000"/><rect x="3" y="14" width="1" height="1" fill="#000"/><rect x="4" y="14" width="8" height="1" fill="#fff"/><rect x="12" y="14" width="1" height="1" fill="#000"/><rect x="3" y="15" width="10" height="1" fill="#000"/></svg>
<div style="position:absolute;left:0px;top:116px;width:1px;height:605px;background:#808080;"></div>
<div style="position:absolute;left:1px;top:117px;width:1px;height:603px;background:#404040;"></div>
<div style="position:absolute;left:1px;top:117px;width:1021px;height:1px;background:#404040;"></div>
<div style="position:absolute;left:2px;top:118px;width:1018px;height:1px;background:#D4D0C8;"></div>
<div style="position:absolute;left:3px;top:119px;width:1px;height:600px;background:#fff;"></div>
<div style="position:absolute;left:3px;top:119px;width:1016px;height:1px;background:#fff;"></div>
<div style="position:absolute;left:1020px;top:118px;width:1px;height:601px;background:#808080;"></div>
<div style="position:absolute;left:1021px;top:117px;width:1px;height:603px;background:#404040;"></div>
<div style="position:absolute;left:2px;top:718px;width:1019px;height:1px;background:#808080;"></div>
<div style="position:absolute;left:1px;top:719px;width:1021px;height:1px;background:#404040;"></div>
<div style="position:absolute;left:1022px;top:116px;width:1px;height:606px;background:#D4D0C8;"></div>
<div style="position:absolute;left:1023px;top:116px;width:1px;height:606px;background:#fff;"></div>
<div style="position:absolute;left:0px;top:720px;width:1024px;height:1px;background:#D4D0C8;"></div>
<div style="position:absolute;left:0px;top:721px;width:1024px;height:1px;background:#fff;"></div>
<div style="position:absolute;left:6px;top:122px;width:1012px;height:18px;background:linear-gradient(to right,#0A246A,#A6CAF0);"></div>
<div style="position:absolute;left:26.25px;top:124.84px;font-size:12px;line-height:12px;font-weight:bold;font-style:normal;color:#fff;white-space:nowrap;letter-spacing:-0.085px;">Work Order Actual Detail</div>
<svg style="left:8px;top:123px" width="16" height="16" viewBox="0 0 16 16"><rect x="0" y="0" width="16" height="1" fill="#8B0000"/><rect x="0" y="1" width="16" height="1" fill="#8B0000"/><rect x="0" y="2" width="8" height="1" fill="#8B0000"/><rect x="8" y="2" width="2" height="1" fill="#FF0000"/><rect x="10" y="2" width="6" height="1" fill="#8B0000"/><rect x="0" y="3" width="4" height="1" fill="#8B0000"/><rect x="4" y="3" width="2" height="1" fill="#E0E000"/><rect x="6" y="3" width="1" height="1" fill="#8000C0"/><rect x="7" y="3" width="4" height="1" fill="#FF0000"/><rect x="11" y="3" width="5" height="1" fill="#8B0000"/><rect x="0" y="4" width="6" height="1" fill="#FF0000"/><rect x="6" y="4" width="1" height="1" fill="#808080"/><rect x="7" y="4" width="2" height="1" fill="#C0C0C0"/><rect x="9" y="4" width="1" height="1" fill="#808080"/><rect x="10" y="4" width="6" height="1" fill="#FF0000"/><rect x="0" y="5" width="5" height="1" fill="#FF0000"/><rect x="5" y="5" width="1" height="1" fill="#808080"/><rect x="6" y="5" width="4" height="1" fill="#FF0000"/><rect x="10" y="5" width="1" height="1" fill="#808080"/><rect x="11" y="5" width="5" height="1" fill="#FF0000"/><rect x="0" y="6" width="5" height="1" fill="#FF0000"/><rect x="5" y="6" width="1" height="1" fill="#808080"/><rect x="6" y="6" width="4" height="1" fill="#FF0000"/><rect x="10" y="6" width="1" height="1" fill="#808080"/><rect x="11" y="6" width="5" height="1" fill="#FF0000"/><rect x="0" y="7" width="5" height="1" fill="#FF0000"/><rect x="5" y="7" width="1" height="1" fill="#808080"/><rect x="6" y="7" width="4" height="1" fill="#C0C0C0"/><rect x="10" y="7" width="1" height="1" fill="#808080"/><rect x="11" y="7" width="5" height="1" fill="#FF0000"/><rect x="0" y="8" width="5" height="1" fill="#FF0000"/><rect x="5" y="8" width="1" height="1" fill="#808080"/><rect x="6" y="8" width="5" height="1" fill="#C0C0C0"/><rect x="11" y="8" width="1" height="1" fill="#808080"/><rect x="12" y="8" width="4" height="1" fill="#FF0000"/><rect x="0" y="9" width="5" height="1" fill="#8B0000"/><rect x="5" y="9" width="1" height="1" fill="#808080"/><rect x="6" y="9" width="5" height="1" fill="#C0C0C0"/><rect x="11" y="9" width="1" height="1" fill="#000"/><rect x="12" y="9" width="4" height="1" fill="#8B0000"/><rect x="0" y="10" width="5" height="1" fill="#8B0000"/><rect x="5" y="10" width="1" height="1" fill="#808080"/><rect x="6" y="10" width="3" height="1" fill="#C0C0C0"/><rect x="9" y="10" width="1" height="1" fill="#0000A0"/><rect x="10" y="10" width="1" height="1" fill="#C0C0C0"/><rect x="11" y="10" width="1" height="1" fill="#000"/><rect x="12" y="10" width="4" height="1" fill="#8B0000"/><rect x="0" y="11" width="5" height="1" fill="#8B0000"/><rect x="5" y="11" width="1" height="1" fill="#808080"/><rect x="6" y="11" width="5" height="1" fill="#C0C0C0"/><rect x="11" y="11" width="1" height="1" fill="#000"/><rect x="12" y="11" width="4" height="1" fill="#8B0000"/><rect x="0" y="12" width="6" height="1" fill="#8B0000"/><rect x="6" y="12" width="6" height="1" fill="#808080"/><rect x="12" y="12" width="4" height="1" fill="#8B0000"/><rect x="0" y="13" width="3" height="1" fill="#8B0000"/><rect x="3" y="13" width="9" height="1" fill="#F0F0F0"/><rect x="12" y="13" width="4" height="1" fill="#8B0000"/><rect x="0" y="14" width="3" height="1" fill="#8B0000"/><rect x="3" y="14" width="9" height="1" fill="#F0F0F0"/><rect x="12" y="14" width="4" height="1" fill="#8B0000"/><rect x="0" y="15" width="3" height="1" fill="#8B0000"/><rect x="3" y="15" width="9" height="1" fill="#F0F0F0"/><rect x="12" y="15" width="1" height="1" fill="#E0E000"/><rect x="13" y="15" width="3" height="1" fill="#8B0000"/></svg>
<div style="position:absolute;left:966px;top:124px;width:16px;height:14px;background:#D4D0C8;box-shadow:inset -1px -1px #404040, inset 1px 1px #fff, inset -2px -2px #808080;"></div>
<div style="position:absolute;left:970px;top:133px;width:6px;height:2px;background:#000;"></div>
<div style="position:absolute;left:982px;top:124px;width:16px;height:14px;background:#D4D0C8;box-shadow:inset -1px -1px #404040, inset 1px 1px #fff, inset -2px -2px #808080;"></div>
<svg style="left:982px;top:124px" width="16" height="14" viewBox="0 0 16 14"><rect x="3" y="2" width="9" height="2" fill="#000"/><rect x="3" y="4" width="1" height="7" fill="#000"/><rect x="11" y="4" width="1" height="7" fill="#000"/><rect x="3" y="10" width="9" height="1" fill="#000"/></svg>
<div style="position:absolute;left:1000px;top:124px;width:16px;height:14px;background:#D4D0C8;box-shadow:inset -1px -1px #404040, inset 1px 1px #fff, inset -2px -2px #808080;"></div>
<svg style="left:1000px;top:124px" width="16" height="14" fill="#000"><rect x="4" y="3" width="1" height="1"/><rect x="5" y="3" width="1" height="1"/><rect x="10" y="3" width="1" height="1"/><rect x="11" y="3" width="1" height="1"/><rect x="5" y="4" width="1" height="1"/><rect x="6" y="4" width="1" height="1"/><rect x="9" y="4" width="1" height="1"/><rect x="10" y="4" width="1" height="1"/><rect x="6" y="5" width="1" height="1"/><rect x="7" y="5" width="1" height="1"/><rect x="8" y="5" width="1" height="1"/><rect x="9" y="5" width="1" height="1"/><rect x="7" y="6" width="1" height="1"/><rect x="8" y="6" width="1" height="1"/><rect x="6" y="7" width="1" height="1"/><rect x="7" y="7" width="1" height="1"/><rect x="8" y="7" width="1" height="1"/><rect x="9" y="7" width="1" height="1"/><rect x="5" y="8" width="1" height="1"/><rect x="6" y="8" width="1" height="1"/><rect x="9" y="8" width="1" height="1"/><rect x="10" y="8" width="1" height="1"/><rect x="4" y="9" width="1" height="1"/><rect x="5" y="9" width="1" height="1"/><rect x="10" y="9" width="1" height="1"/><rect x="11" y="9" width="1" height="1"/></svg>
<div style="position:absolute;left:6px;top:141px;width:1012px;height:545px;box-shadow:inset 1px 1px #808080, inset -1px -1px #fff, inset 2px 2px #404040, inset -2px -2px #D4D0C8;"></div>
<div style="position:absolute;left:8px;top:143px;width:18px;height:525px;background:#D4D0C8;"></div>
<div style="position:absolute;left:26px;top:143px;width:1px;height:525px;background:#000;"></div>
<div style="position:absolute;left:27px;top:143px;width:973px;height:525px;background:#fff;"></div>
<div style="position:absolute;left:50px;top:143px;width:1px;height:525px;background:#0000FF;"></div>
<svg style="left:8px;top:143px" width="18" height="525" viewBox="0 0 18 525"><rect x="15" y="3" width="3" height="1" fill="#000"/><rect x="4" y="9" width="14" height="1" fill="#000"/><rect x="15" y="15" width="3" height="1" fill="#000"/><rect x="12" y="21" width="6" height="1" fill="#000"/><rect x="15" y="27" width="3" height="1" fill="#000"/><rect x="10" y="33" width="8" height="1" fill="#000"/><rect x="15" y="39" width="3" height="1" fill="#000"/><rect x="12" y="45" width="6" height="1" fill="#000"/><rect x="15" y="51" width="3" height="1" fill="#000"/><rect x="7" y="57" width="11" height="1" fill="#000"/><rect x="15" y="63" width="3" height="1" fill="#000"/><rect x="12" y="69" width="6" height="1" fill="#000"/><rect x="15" y="75" width="3" height="1" fill="#000"/><rect x="10" y="81" width="8" height="1" fill="#000"/><rect x="15" y="87" width="3" height="1" fill="#000"/><rect x="12" y="93" width="6" height="1" fill="#000"/><rect x="15" y="99" width="3" height="1" fill="#000"/><rect x="4" y="105" width="14" height="1" fill="#000"/><rect x="15" y="111" width="3" height="1" fill="#000"/><rect x="12" y="117" width="6" height="1" fill="#000"/><rect x="15" y="123" width="3" height="1" fill="#000"/><rect x="10" y="129" width="8" height="1" fill="#000"/><rect x="15" y="135" width="3" height="1" fill="#000"/><rect x="12" y="141" width="6" height="1" fill="#000"/><rect x="15" y="147" width="3" height="1" fill="#000"/><rect x="7" y="153" width="11" height="1" fill="#000"/><rect x="15" y="159" width="3" height="1" fill="#000"/><rect x="12" y="165" width="6" height="1" fill="#000"/><rect x="15" y="171" width="3" height="1" fill="#000"/><rect x="10" y="177" width="8" height="1" fill="#000"/><rect x="15" y="183" width="3" height="1" fill="#000"/><rect x="12" y="189" width="6" height="1" fill="#000"/><rect x="15" y="195" width="3" height="1" fill="#000"/><rect x="4" y="201" width="14" height="1" fill="#000"/><rect x="15" y="207" width="3" height="1" fill="#000"/><rect x="12" y="213" width="6" height="1" fill="#000"/><rect x="15" y="219" width="3" height="1" fill="#000"/><rect x="10" y="225" width="8" height="1" fill="#000"/><rect x="15" y="231" width="3" height="1" fill="#000"/><rect x="12" y="237" width="6" height="1" fill="#000"/><rect x="15" y="243" width="3" height="1" fill="#000"/><rect x="7" y="249" width="11" height="1" fill="#000"/><rect x="15" y="255" width="3" height="1" fill="#000"/><rect x="12" y="261" width="6" height="1" fill="#000"/><rect x="15" y="267" width="3" height="1" fill="#000"/><rect x="10" y="273" width="8" height="1" fill="#000"/><rect x="15" y="279" width="3" height="1" fill="#000"/><rect x="12" y="285" width="6" height="1" fill="#000"/><rect x="15" y="291" width="3" height="1" fill="#000"/><rect x="4" y="297" width="14" height="1" fill="#000"/><rect x="15" y="303" width="3" height="1" fill="#000"/><rect x="12" y="309" width="6" height="1" fill="#000"/><rect x="15" y="315" width="3" height="1" fill="#000"/><rect x="10" y="321" width="8" height="1" fill="#000"/><rect x="15" y="327" width="3" height="1" fill="#000"/><rect x="12" y="333" width="6" height="1" fill="#000"/><rect x="15" y="339" width="3" height="1" fill="#000"/><rect x="7" y="345" width="11" height="1" fill="#000"/><rect x="15" y="351" width="3" height="1" fill="#000"/><rect x="12" y="357" width="6" height="1" fill="#000"/><rect x="15" y="363" width="3" height="1" fill="#000"/><rect x="10" y="369" width="8" height="1" fill="#000"/><rect x="15" y="375" width="3" height="1" fill="#000"/><rect x="12" y="381" width="6" height="1" fill="#000"/><rect x="15" y="387" width="3" height="1" fill="#000"/><rect x="4" y="393" width="14" height="1" fill="#000"/><rect x="15" y="399" width="3" height="1" fill="#000"/><rect x="12" y="405" width="6" height="1" fill="#000"/><rect x="15" y="411" width="3" height="1" fill="#000"/><rect x="10" y="417" width="8" height="1" fill="#000"/><rect x="15" y="423" width="3" height="1" fill="#000"/><rect x="12" y="429" width="6" height="1" fill="#000"/><rect x="15" y="435" width="3" height="1" fill="#000"/><rect x="7" y="441" width="11" height="1" fill="#000"/><rect x="15" y="447" width="3" height="1" fill="#000"/><rect x="12" y="453" width="6" height="1" fill="#000"/><rect x="15" y="459" width="3" height="1" fill="#000"/><rect x="10" y="465" width="8" height="1" fill="#000"/><rect x="15" y="471" width="3" height="1" fill="#000"/><rect x="12" y="477" width="6" height="1" fill="#000"/><rect x="15" y="483" width="3" height="1" fill="#000"/><rect x="4" y="489" width="14" height="1" fill="#000"/><rect x="15" y="495" width="3" height="1" fill="#000"/><rect x="12" y="501" width="6" height="1" fill="#000"/><rect x="15" y="507" width="3" height="1" fill="#000"/><rect x="10" y="513" width="8" height="1" fill="#000"/><rect x="15" y="519" width="3" height="1" fill="#000"/></svg>
<svg style="left:12px;top:143px" width="6" height="8" fill="#000"><rect x="0" y="0" width="1" height="1"/><rect x="1" y="0" width="1" height="1"/><rect x="1" y="1" width="1" height="1"/><rect x="1" y="2" width="1" height="1"/><rect x="1" y="3" width="1" height="1"/><rect x="1" y="4" width="1" height="1"/><rect x="1" y="5" width="1" height="1"/></svg>
<svg style="left:11px;top:238px" width="6" height="8" fill="#000"><rect x="1" y="0" width="1" height="1"/><rect x="2" y="0" width="1" height="1"/><rect x="0" y="1" width="1" height="1"/><rect x="3" y="1" width="1" height="1"/><rect x="3" y="2" width="1" height="1"/><rect x="2" y="3" width="1" height="1"/><rect x="1" y="4" width="1" height="1"/><rect x="0" y="5" width="1" height="1"/><rect x="0" y="6" width="1" height="1"/><rect x="1" y="6" width="1" height="1"/><rect x="2" y="6" width="1" height="1"/><rect x="3" y="6" width="1" height="1"/></svg>
<svg style="left:11px;top:334px" width="6" height="8" fill="#000"><rect x="1" y="0" width="1" height="1"/><rect x="2" y="0" width="1" height="1"/><rect x="0" y="1" width="1" height="1"/><rect x="3" y="1" width="1" height="1"/><rect x="3" y="2" width="1" height="1"/><rect x="2" y="3" width="1" height="1"/><rect x="3" y="4" width="1" height="1"/><rect x="0" y="5" width="1" height="1"/><rect x="3" y="5" width="1" height="1"/><rect x="1" y="6" width="1" height="1"/><rect x="2" y="6" width="1" height="1"/></svg>
<svg style="left:11px;top:430px" width="6" height="8" fill="#000"><rect x="3" y="0" width="1" height="1"/><rect x="2" y="1" width="1" height="1"/><rect x="3" y="1" width="1" height="1"/><rect x="1" y="2" width="1" height="1"/><rect x="3" y="2" width="1" height="1"/><rect x="0" y="3" width="1" height="1"/><rect x="3" y="3" width="1" height="1"/><rect x="0" y="4" width="1" height="1"/><rect x="1" y="4" width="1" height="1"/><rect x="2" y="4" width="1" height="1"/><rect x="3" y="4" width="1" height="1"/><rect x="4" y="4" width="1" height="1"/><rect x="3" y="5" width="1" height="1"/><rect x="3" y="6" width="1" height="1"/></svg>
<svg style="left:11px;top:526px" width="6" height="8" fill="#000"><rect x="1" y="0" width="1" height="1"/><rect x="2" y="0" width="1" height="1"/><rect x="3" y="0" width="1" height="1"/><rect x="1" y="1" width="1" height="1"/><rect x="0" y="2" width="1" height="1"/><rect x="1" y="2" width="1" height="1"/><rect x="2" y="2" width="1" height="1"/><rect x="3" y="3" width="1" height="1"/><rect x="3" y="4" width="1" height="1"/><rect x="0" y="5" width="1" height="1"/><rect x="3" y="5" width="1" height="1"/><rect x="1" y="6" width="1" height="1"/><rect x="2" y="6" width="1" height="1"/></svg>
<svg style="left:11px;top:622px" width="6" height="8" fill="#000"><rect x="1" y="0" width="1" height="1"/><rect x="2" y="0" width="1" height="1"/><rect x="0" y="1" width="1" height="1"/><rect x="3" y="1" width="1" height="1"/><rect x="0" y="2" width="1" height="1"/><rect x="0" y="3" width="1" height="1"/><rect x="1" y="3" width="1" height="1"/><rect x="2" y="3" width="1" height="1"/><rect x="0" y="4" width="1" height="1"/><rect x="3" y="4" width="1" height="1"/><rect x="0" y="5" width="1" height="1"/><rect x="3" y="5" width="1" height="1"/><rect x="1" y="6" width="1" height="1"/><rect x="2" y="6" width="1" height="1"/></svg>
<div class="dith" style="position:absolute;left:1000px;top:159px;width:16px;height:493px"></div>
<div style="position:absolute;left:1000px;top:143px;width:16px;height:16px;background:#D4D0C8;box-shadow:inset -1px -1px #404040, inset 1px 1px #D4D0C8, inset -2px -2px #808080, inset 2px 2px #fff;"></div>
<div style="position:absolute;left:1000px;top:652px;width:16px;height:16px;background:#D4D0C8;box-shadow:inset -1px -1px #404040, inset 1px 1px #D4D0C8, inset -2px -2px #808080, inset 2px 2px #fff;"></div>
<div style="position:absolute;left:1000px;top:189px;width:16px;height:152px;background:#D4D0C8;box-shadow:inset -1px -1px #404040, inset 1px 1px #D4D0C8, inset -2px -2px #808080, inset 2px 2px #fff;"></div>
<svg style="left:1000px;top:143px" width="16" height="16" fill="#000"><rect x="7" y="6" width="1" height="1"/><rect x="6" y="7" width="3" height="1"/><rect x="5" y="8" width="5" height="1"/><rect x="4" y="9" width="7" height="1"/></svg>
<svg style="left:1000px;top:652px" width="16" height="16" fill="#000"><rect x="4" y="6" width="7" height="1"/><rect x="5" y="7" width="5" height="1"/><rect x="6" y="8" width="3" height="1"/><rect x="7" y="9" width="1" height="1"/></svg>
<div class="dith" style="position:absolute;left:24px;top:668px;width:960px;height:16px"></div>
<div style="position:absolute;left:8px;top:668px;width:16px;height:16px;background:#D4D0C8;box-shadow:inset -1px -1px #404040, inset 1px 1px #D4D0C8, inset -2px -2px #808080, inset 2px 2px #fff;"></div>
<div style="position:absolute;left:984px;top:668px;width:16px;height:16px;background:#D4D0C8;box-shadow:inset -1px -1px #404040, inset 1px 1px #D4D0C8, inset -2px -2px #808080, inset 2px 2px #fff;"></div>
<div style="position:absolute;left:24px;top:668px;width:864px;height:16px;background:#D4D0C8;box-shadow:inset -1px -1px #404040, inset 1px 1px #D4D0C8, inset -2px -2px #808080, inset 2px 2px #fff;"></div>
<svg style="left:8px;top:668px" width="16" height="16" fill="#000"><rect x="5" y="7" width="1" height="1"/><rect x="6" y="6" width="1" height="3"/><rect x="7" y="5" width="1" height="5"/><rect x="8" y="4" width="1" height="7"/></svg>
<svg style="left:984px;top:668px" width="16" height="16" fill="#000"><rect x="6" y="4" width="1" height="7"/><rect x="7" y="5" width="1" height="5"/><rect x="8" y="6" width="1" height="3"/><rect x="9" y="7" width="1" height="1"/></svg>
<div style="position:absolute;left:1000px;top:668px;width:16px;height:16px;background:#D4D0C8;"></div>
<div style="position:absolute;left:6px;top:686px;width:1012px;height:30px;background:#C5C3C7;"></div>
<div style="position:absolute;left:824px;top:689px;width:88px;height:27px;background:#D4D0C8;box-shadow:inset -1px -1px #404040, inset 1px 1px #fff, inset -2px -2px #808080;"></div>
<div style="position:absolute;left:668.0px;width:400px;text-align:center;top:696.00px;font-size:13px;line-height:13px;font-weight:bold;font-style:normal;color:#000;white-space:nowrap;"><span style="text-decoration:underline">P</span>rint</div>
<div style="position:absolute;left:926px;top:689px;width:88px;height:27px;background:#D4D0C8;box-shadow:inset -1px -1px #404040, inset 1px 1px #fff, inset -2px -2px #808080;"></div>
<div style="position:absolute;left:770.0px;width:400px;text-align:center;top:696.00px;font-size:13px;line-height:13px;font-weight:bold;font-style:normal;color:#000;white-space:nowrap;"><span style="text-decoration:underline">C</span>ancel</div>
<div style="position:absolute;left:0;top:724px;width:1024px;height:16px;box-shadow:inset 1px 1px #808080, inset -1px -1px #fff;"></div>
<div style="position:absolute;left:0px;top:741px;width:1024px;height:1px;background:#fff;"></div>
<div style="position:absolute;left:3.01px;top:725.84px;font-size:12px;line-height:12px;font-weight:normal;font-style:normal;color:#000;white-space:nowrap;transform:scaleX(0.8910);transform-origin:0 0;">Double click for zoom options</div>
<div style="position:absolute;left:0;top:0;width:1024px;height:744px;clip-path:inset(143px 24px 76px 27px)">
<div style="position:absolute;left:52.00px;top:149.69px;font-size:11px;line-height:11px;font-weight:bold;font-style:normal;color:#000;white-space:nowrap;letter-spacing:0.256px;">Work Order</div>
<div style="position:absolute;left:51.00px;top:163.69px;font-size:11px;line-height:11px;font-weight:bold;font-style:normal;color:#000;white-space:nowrap;letter-spacing:0.000px;">Number</div>
<div style="position:absolute;left:141.00px;top:149.69px;font-size:11px;line-height:11px;font-weight:bold;font-style:normal;color:#000;white-space:nowrap;letter-spacing:0.044px;">Originator</div>
<div style="position:absolute;left:256.00px;top:149.69px;font-size:11px;line-height:11px;font-weight:bold;font-style:normal;color:#000;white-space:nowrap;letter-spacing:0.200px;">Status</div>
<div style="position:absolute;left:296.00px;top:149.69px;font-size:11px;line-height:11px;font-weight:bold;font-style:normal;color:#000;white-space:nowrap;letter-spacing:0.214px;">Priority</div>
<div style="position:absolute;left:368.00px;top:149.69px;font-size:11px;line-height:11px;font-weight:bold;font-style:normal;color:#000;white-space:nowrap;letter-spacing:-0.044px;">KKS Number</div>
<div style="position:absolute;left:920.00px;top:149.69px;font-size:11px;line-height:11px;font-weight:bold;font-style:normal;color:#000;white-space:nowrap;letter-spacing:0.000px;">Work</div>
<div style="position:absolute;left:920.00px;top:163.69px;font-size:11px;line-height:11px;font-weight:bold;font-style:normal;color:#000;white-space:nowrap;letter-spacing:0.000px;">Type</div>
<div style="position:absolute;left:976.00px;top:149.69px;font-size:11px;line-height:11px;font-weight:bold;font-style:normal;color:#000;white-space:nowrap;letter-spacing:0.000px;">Work</div>
<div style="position:absolute;left:976.00px;top:163.69px;font-size:11px;line-height:11px;font-weight:bold;font-style:normal;color:#000;white-space:nowrap;letter-spacing:0.000px;">Area</div>
<div style="position:absolute;left:52px;top:178px;width:948px;height:2px;background:#000;"></div>
<div style="position:absolute;left:51.70px;top:183.84px;font-size:12px;line-height:12px;font-weight:normal;font-style:normal;color:#000;white-space:nowrap;letter-spacing:0.375px;">C1010</div>
<div style="position:absolute;left:140.00px;top:183.69px;font-size:11px;line-height:11px;font-weight:normal;font-style:normal;color:#000;white-space:nowrap;letter-spacing:-0.292px;">DAVID McDONALD</div>
<div style="position:absolute;left:255.00px;top:183.69px;font-size:11px;line-height:11px;font-weight:normal;font-style:normal;color:#000;white-space:nowrap;letter-spacing:0.700px;">CMP</div>
<div style="position:absolute;left:296.00px;top:183.69px;font-size:11px;line-height:11px;font-weight:normal;font-style:normal;color:#000;white-space:nowrap;letter-spacing:0.000px;">2</div>
<div style="position:absolute;left:368.60px;top:183.84px;font-size:12px;line-height:12px;font-weight:normal;font-style:normal;color:#000;white-space:nowrap;letter-spacing:0.127px;">90HSJ10BB001</div>
<div style="position:absolute;left:920.00px;top:183.69px;font-size:11px;line-height:11px;font-weight:normal;font-style:normal;color:#000;white-space:nowrap;letter-spacing:0.000px;">W</div>
<div style="position:absolute;left:976.00px;top:183.69px;font-size:11px;line-height:11px;font-weight:normal;font-style:normal;color:#000;white-space:nowrap;letter-spacing:-0.200px;">AB</div>
<div style="position:absolute;left:57.00px;top:215.69px;font-size:11px;line-height:11px;font-weight:bold;font-style:normal;color:#000;white-space:nowrap;letter-spacing:0.329px;">Planner:</div>
<div style="position:absolute;left:58.00px;top:233.69px;font-size:11px;line-height:11px;font-weight:bold;font-style:normal;color:#000;white-space:nowrap;letter-spacing:0.275px;">Approver:</div>
<div style="position:absolute;left:58.00px;top:251.69px;font-size:11px;line-height:11px;font-weight:bold;font-style:normal;color:#000;white-space:nowrap;letter-spacing:0.162px;">Work Location:</div>
<div style="position:absolute;left:58.00px;top:269.69px;font-size:11px;line-height:11px;font-weight:bold;font-style:normal;color:#000;white-space:nowrap;letter-spacing:0.393px;">Work Requested:</div>
<div style="position:absolute;left:173.00px;top:269.69px;font-size:11px;line-height:11px;font-weight:normal;font-style:normal;color:#000;white-space:nowrap;letter-spacing:-0.069px;">Inspect the inside of the tank</div>
<div style="position:absolute;left:330.00px;top:215.69px;font-size:11px;line-height:11px;font-weight:bold;font-style:normal;color:#000;white-space:nowrap;letter-spacing:0.038px;">Due Date:</div>
<div style="position:absolute;left:331.00px;top:233.69px;font-size:11px;line-height:11px;font-weight:bold;font-style:normal;color:#000;white-space:nowrap;letter-spacing:0.180px;">Completion Date:</div>
<div style="position:absolute;left:453.00px;top:215.69px;font-size:11px;line-height:11px;font-weight:normal;font-style:normal;color:#000;white-space:nowrap;letter-spacing:-0.367px;">03/05/2001</div>
<div style="position:absolute;left:453.00px;top:233.69px;font-size:11px;line-height:11px;font-weight:normal;font-style:normal;color:#000;white-space:nowrap;letter-spacing:-0.256px;">00/00/0000</div>
<div style="position:absolute;left:545.00px;top:215.69px;font-size:11px;line-height:11px;font-weight:bold;font-style:normal;color:#000;white-space:nowrap;letter-spacing:0.229px;">SC Time:</div>
<div style="position:absolute;left:545.00px;top:233.69px;font-size:11px;line-height:11px;font-weight:bold;font-style:normal;color:#000;white-space:nowrap;letter-spacing:0.133px;">Safety?</div>
<div style="position:absolute;left:668.00px;top:215.69px;font-size:11px;line-height:11px;font-weight:normal;font-style:normal;color:#000;white-space:nowrap;letter-spacing:-0.450px;">00:47</div>
<div style="position:absolute;left:668.00px;top:233.69px;font-size:11px;line-height:11px;font-weight:normal;font-style:normal;color:#000;white-space:nowrap;letter-spacing:0.000px;">Y</div>
<div style="position:absolute;left:756.00px;top:214.69px;font-size:11px;line-height:11px;font-weight:bold;font-style:normal;color:#000;white-space:nowrap;letter-spacing:0.370px;">Cause Code:</div>
<div style="position:absolute;left:756.00px;top:231.69px;font-size:11px;line-height:11px;font-weight:bold;font-style:normal;color:#000;white-space:nowrap;letter-spacing:0.155px;">Action Code:</div>
<div style="position:absolute;left:646.00px;top:269.69px;font-size:11px;line-height:11px;font-weight:bold;font-style:normal;color:#000;white-space:nowrap;letter-spacing:0.259px;">Corrective Action:</div>
<div style="position:absolute;left:61px;top:319px;width:710px;height:133px;border:1px solid #000"></div>
<div style="position:absolute;left:348.00px;top:330.46px;font-size:16px;line-height:16px;font-weight:normal;font-style:italic;color:#000;white-space:nowrap;letter-spacing:0.562px;-webkit-text-stroke:0.3px #000;">Employee Activity</div>
<div style="position:absolute;left:73.00px;top:369.69px;font-size:11px;line-height:11px;font-weight:bold;font-style:normal;color:#000;white-space:nowrap;letter-spacing:0.180px;">Report Date</div>
<div style="position:absolute;left:144.20px;top:369.69px;font-size:11px;line-height:11px;font-weight:bold;font-style:normal;color:#000;white-space:nowrap;letter-spacing:0.233px;">Name</div>
<div style="position:absolute;left:359.00px;top:371.19px;font-size:11px;line-height:11px;font-weight:bold;font-style:normal;color:#000;white-space:nowrap;letter-spacing:0.058px;">Activity Code</div>
<div style="position:absolute;left:465.00px;top:355.69px;font-size:11px;line-height:11px;font-weight:bold;font-style:normal;color:#000;white-space:nowrap;letter-spacing:0.000px;">Craft</div>
<div style="position:absolute;left:465.00px;top:369.69px;font-size:11px;line-height:11px;font-weight:bold;font-style:normal;color:#000;white-space:nowrap;letter-spacing:0.200px;">Code</div>
<div style="position:absolute;left:535.40px;top:369.69px;font-size:11px;line-height:11px;font-weight:bold;font-style:normal;color:#000;white-space:nowrap;letter-spacing:0.400px;">Hours</div>
<div style="position:absolute;left:608.80px;top:369.69px;font-size:11px;line-height:11px;font-weight:bold;font-style:normal;color:#000;white-space:nowrap;letter-spacing:0.200px;">Rate</div>
<div style="position:absolute;left:694.90px;top:371.69px;font-size:11px;line-height:11px;font-weight:bold;font-style:normal;color:#000;white-space:nowrap;letter-spacing:0.150px;">Actual Cost</div>
<div style="position:absolute;left:74px;top:382px;width:684px;height:2px;background:#000;"></div>
<div style="position:absolute;left:74.00px;top:387.69px;font-size:11px;line-height:11px;font-weight:normal;font-style:normal;color:#000;white-space:nowrap;letter-spacing:-0.333px;">06/18/2001</div>
<div style="position:absolute;left:144.00px;top:387.69px;font-size:11px;line-height:11px;font-weight:normal;font-style:normal;color:#000;white-space:nowrap;letter-spacing:-0.700px;">RON OWEN</div>
<div style="position:absolute;left:358.00px;top:387.69px;font-size:11px;line-height:11px;font-weight:normal;font-style:normal;color:#000;white-space:nowrap;letter-spacing:-0.600px;">MAIN</div>
<div style="position:absolute;left:464.00px;top:387.69px;font-size:11px;line-height:11px;font-weight:normal;font-style:normal;color:#000;white-space:nowrap;letter-spacing:0.000px;">IC</div>
<div style="position:absolute;left:547.80px;top:387.69px;font-size:11px;line-height:11px;font-weight:normal;font-style:normal;color:#000;white-space:nowrap;letter-spacing:0.067px;">2.00</div>
<div style="position:absolute;left:611.70px;top:387.69px;font-size:11px;line-height:11px;font-weight:normal;font-style:normal;color:#000;white-space:nowrap;letter-spacing:0.233px;">39.5</div>
<div style="position:absolute;left:724.80px;top:387.69px;font-size:11px;line-height:11px;font-weight:normal;font-style:normal;color:#000;white-space:nowrap;letter-spacing:-0.080px;">$79.00</div>
<div style="position:absolute;left:418px;top:413px;width:145px;height:1px;background:#000;"></div>
<div style="position:absolute;left:594px;top:414px;width:164px;height:1px;background:#000;"></div>
<div style="position:absolute;left:418.40px;top:421.69px;font-size:11px;line-height:11px;font-weight:bold;font-style:normal;color:#000;white-space:nowrap;letter-spacing:0.164px;">Total Hours:</div>
<div style="position:absolute;left:540.40px;top:421.69px;font-size:11px;line-height:11px;font-weight:normal;font-style:normal;color:#000;white-space:nowrap;letter-spacing:0.200px;">2.00</div>
<div style="position:absolute;left:593.00px;top:421.69px;font-size:11px;line-height:11px;font-weight:bold;font-style:italic;color:#000;white-space:nowrap;letter-spacing:0.145px;">Total Costs:</div>
<div style="position:absolute;left:724.80px;top:421.69px;font-size:11px;line-height:11px;font-weight:normal;font-style:normal;color:#000;white-space:nowrap;letter-spacing:-0.080px;">$79.00</div>
<div style="position:absolute;left:418px;top:441px;width:145px;height:1px;background:#000;"></div>
<div style="position:absolute;left:418px;top:445px;width:145px;height:1px;background:#000;"></div>
<div style="position:absolute;left:594px;top:441px;width:164px;height:1px;background:#000;"></div>
<div style="position:absolute;left:594px;top:445px;width:164px;height:1px;background:#000;"></div>
<div style="position:absolute;left:74.40px;top:430.69px;font-size:11px;line-height:11px;font-weight:bold;font-style:italic;color:#000;white-space:nowrap;letter-spacing:0.100px;">1 Employee(s) listed.</div>
<div style="position:absolute;left:61px;top:456px;width:710px;height:194px;border:1px solid #000"></div>
<div style="position:absolute;left:344.80px;top:467.46px;font-size:16px;line-height:16px;font-weight:normal;font-style:italic;color:#000;white-space:nowrap;letter-spacing:0.594px;-webkit-text-stroke:0.3px #000;">Contractor Activity</div>
<div style="position:absolute;left:72.80px;top:506.69px;font-size:11px;line-height:11px;font-weight:bold;font-style:normal;color:#000;white-space:nowrap;letter-spacing:-0.033px;">Date</div>
<div style="position:absolute;left:140.60px;top:506.69px;font-size:11px;line-height:11px;font-weight:bold;font-style:normal;color:#000;white-space:nowrap;letter-spacing:0.129px;">Supplier</div>
<div style="position:absolute;left:270.10px;top:492.69px;font-size:11px;line-height:11px;font-weight:bold;font-style:normal;color:#000;white-space:nowrap;letter-spacing:-0.129px;">Activity</div>
<div style="position:absolute;left:270.00px;top:506.69px;font-size:11px;line-height:11px;font-weight:bold;font-style:normal;color:#000;white-space:nowrap;letter-spacing:0.333px;">Code</div>
<div style="position:absolute;left:376.00px;top:506.69px;font-size:11px;line-height:11px;font-weight:bold;font-style:normal;color:#000;white-space:nowrap;letter-spacing:0.260px;">Description</div>
<div style="position:absolute;left:641.30px;top:492.69px;font-size:11px;line-height:11px;font-weight:bold;font-style:normal;color:#000;white-space:nowrap;letter-spacing:-0.020px;">Actual</div>
<div style="position:absolute;left:657.00px;top:506.69px;font-size:11px;line-height:11px;font-weight:bold;font-style:normal;color:#000;white-space:nowrap;letter-spacing:-0.500px;">Qty</div>
<div style="position:absolute;left:724.50px;top:492.69px;font-size:11px;line-height:11px;font-weight:bold;font-style:normal;color:#000;white-space:nowrap;letter-spacing:-0.020px;">Actual</div>
<div style="position:absolute;left:731.80px;top:506.69px;font-size:11px;line-height:11px;font-weight:bold;font-style:normal;color:#000;white-space:nowrap;letter-spacing:0.533px;">Cost</div>
<div style="position:absolute;left:74px;top:518px;width:684px;height:2px;background:#000;"></div>
<div style="position:absolute;left:73.00px;top:523.69px;font-size:11px;line-height:11px;font-weight:normal;font-style:normal;color:#000;white-space:nowrap;letter-spacing:-0.188px;">6/20/2001</div>
<div style="position:absolute;left:140.60px;top:523.69px;font-size:11px;line-height:11px;font-weight:normal;font-style:normal;color:#000;white-space:nowrap;letter-spacing:0.020px;">ATLASC</div>
<div style="position:absolute;left:269.00px;top:523.69px;font-size:11px;line-height:11px;font-weight:normal;font-style:normal;color:#000;white-space:nowrap;letter-spacing:-0.667px;">MAIN</div>
<div style="position:absolute;left:376.00px;top:523.69px;font-size:11px;line-height:11px;font-weight:normal;font-style:normal;color:#000;white-space:nowrap;letter-spacing:-0.032px;">Repair Service - clean gearbox and replace</div>
<div style="position:absolute;left:653.50px;top:523.69px;font-size:11px;line-height:11px;font-weight:normal;font-style:normal;color:#000;white-space:nowrap;letter-spacing:-0.167px;">4.00</div>
<div style="position:absolute;left:718.90px;top:523.69px;font-size:11px;line-height:11px;font-weight:normal;font-style:normal;color:#000;white-space:nowrap;letter-spacing:-0.250px;">$600.00</div>
<div style="position:absolute;left:376.00px;top:537.69px;font-size:11px;line-height:11px;font-weight:normal;font-style:normal;color:#000;white-space:nowrap;letter-spacing:-0.050px;">semi-fluid grease</div>
<div style="position:absolute;left:73.00px;top:551.69px;font-size:11px;line-height:11px;font-weight:normal;font-style:normal;color:#000;white-space:nowrap;letter-spacing:-0.188px;">6/19/2001</div>
<div style="position:absolute;left:139.60px;top:551.69px;font-size:11px;line-height:11px;font-weight:normal;font-style:normal;color:#000;white-space:nowrap;letter-spacing:-0.625px;">ELCON</div>
<div style="position:absolute;left:269.00px;top:551.69px;font-size:11px;line-height:11px;font-weight:normal;font-style:normal;color:#000;white-space:nowrap;letter-spacing:-0.667px;">MAIN</div>
<div style="position:absolute;left:376.00px;top:551.69px;font-size:11px;line-height:11px;font-weight:normal;font-style:normal;color:#000;white-space:nowrap;letter-spacing:0.075px;">Misc Services</div>
<div style="position:absolute;left:652.50px;top:551.69px;font-size:11px;line-height:11px;font-weight:normal;font-style:normal;color:#000;white-space:nowrap;letter-spacing:0.167px;">3.00</div>
<div style="position:absolute;left:718.90px;top:551.69px;font-size:11px;line-height:11px;font-weight:normal;font-style:normal;color:#000;white-space:nowrap;letter-spacing:-0.083px;">$114.00</div>
<div style="position:absolute;left:73.00px;top:571.69px;font-size:11px;line-height:11px;font-weight:normal;font-style:normal;color:#000;white-space:nowrap;letter-spacing:-0.188px;">6/19/2001</div>
<div style="position:absolute;left:139.60px;top:571.69px;font-size:11px;line-height:11px;font-weight:normal;font-style:normal;color:#000;white-space:nowrap;letter-spacing:-0.625px;">ELCON</div>
<div style="position:absolute;left:269.00px;top:571.69px;font-size:11px;line-height:11px;font-weight:normal;font-style:normal;color:#000;white-space:nowrap;letter-spacing:-0.667px;">MAIN</div>
<div style="position:absolute;left:376.00px;top:571.69px;font-size:11px;line-height:11px;font-weight:normal;font-style:normal;color:#000;white-space:nowrap;letter-spacing:0.075px;">Misc Services</div>
<div style="position:absolute;left:652.50px;top:571.69px;font-size:11px;line-height:11px;font-weight:normal;font-style:normal;color:#000;white-space:nowrap;letter-spacing:0.167px;">2.00</div>
<div style="position:absolute;left:724.50px;top:571.69px;font-size:11px;line-height:11px;font-weight:normal;font-style:normal;color:#000;white-space:nowrap;letter-spacing:-0.020px;">$76.00</div>
<div style="position:absolute;left:73.00px;top:591.69px;font-size:11px;line-height:11px;font-weight:normal;font-style:normal;color:#000;white-space:nowrap;letter-spacing:-0.188px;">6/19/2001</div>
<div style="position:absolute;left:139.60px;top:591.69px;font-size:11px;line-height:11px;font-weight:normal;font-style:normal;color:#000;white-space:nowrap;letter-spacing:-0.700px;">ENTEII</div>
<div style="position:absolute;left:269.00px;top:591.69px;font-size:11px;line-height:11px;font-weight:normal;font-style:normal;color:#000;white-space:nowrap;letter-spacing:-0.667px;">MAIN</div>
<div style="position:absolute;left:376.00px;top:591.69px;font-size:11px;line-height:11px;font-weight:normal;font-style:normal;color:#000;white-space:nowrap;letter-spacing:-0.200px;">Posted Contract Time</div>
<div style="position:absolute;left:652.50px;top:591.69px;font-size:11px;line-height:11px;font-weight:normal;font-style:normal;color:#000;white-space:nowrap;letter-spacing:0.167px;">1.00</div>
<div style="position:absolute;left:709.90px;top:591.69px;font-size:11px;line-height:11px;font-weight:normal;font-style:normal;color:#000;white-space:nowrap;letter-spacing:-0.188px;">$1,000.00</div>
<div style="position:absolute;left:606px;top:613px;width:152px;height:1px;background:#000;"></div>
<div style="position:absolute;left:605.00px;top:620.69px;font-size:11px;line-height:11px;font-weight:bold;font-style:italic;color:#000;white-space:nowrap;letter-spacing:0.282px;">Total Costs:</div>
<div style="position:absolute;left:709.90px;top:620.69px;font-size:11px;line-height:11px;font-weight:normal;font-style:normal;color:#000;white-space:nowrap;letter-spacing:-0.188px;">$1,790.00</div>
<div style="position:absolute;left:606px;top:640px;width:152px;height:1px;background:#000;"></div>
<div style="position:absolute;left:606px;top:644px;width:152px;height:1px;background:#000;"></div>
<div style="position:absolute;left:74.20px;top:629.69px;font-size:11px;line-height:11px;font-weight:bold;font-style:italic;color:#000;white-space:nowrap;letter-spacing:0.155px;">4 Contractor(s) listed.</div>
</div>
</div></body></html>
